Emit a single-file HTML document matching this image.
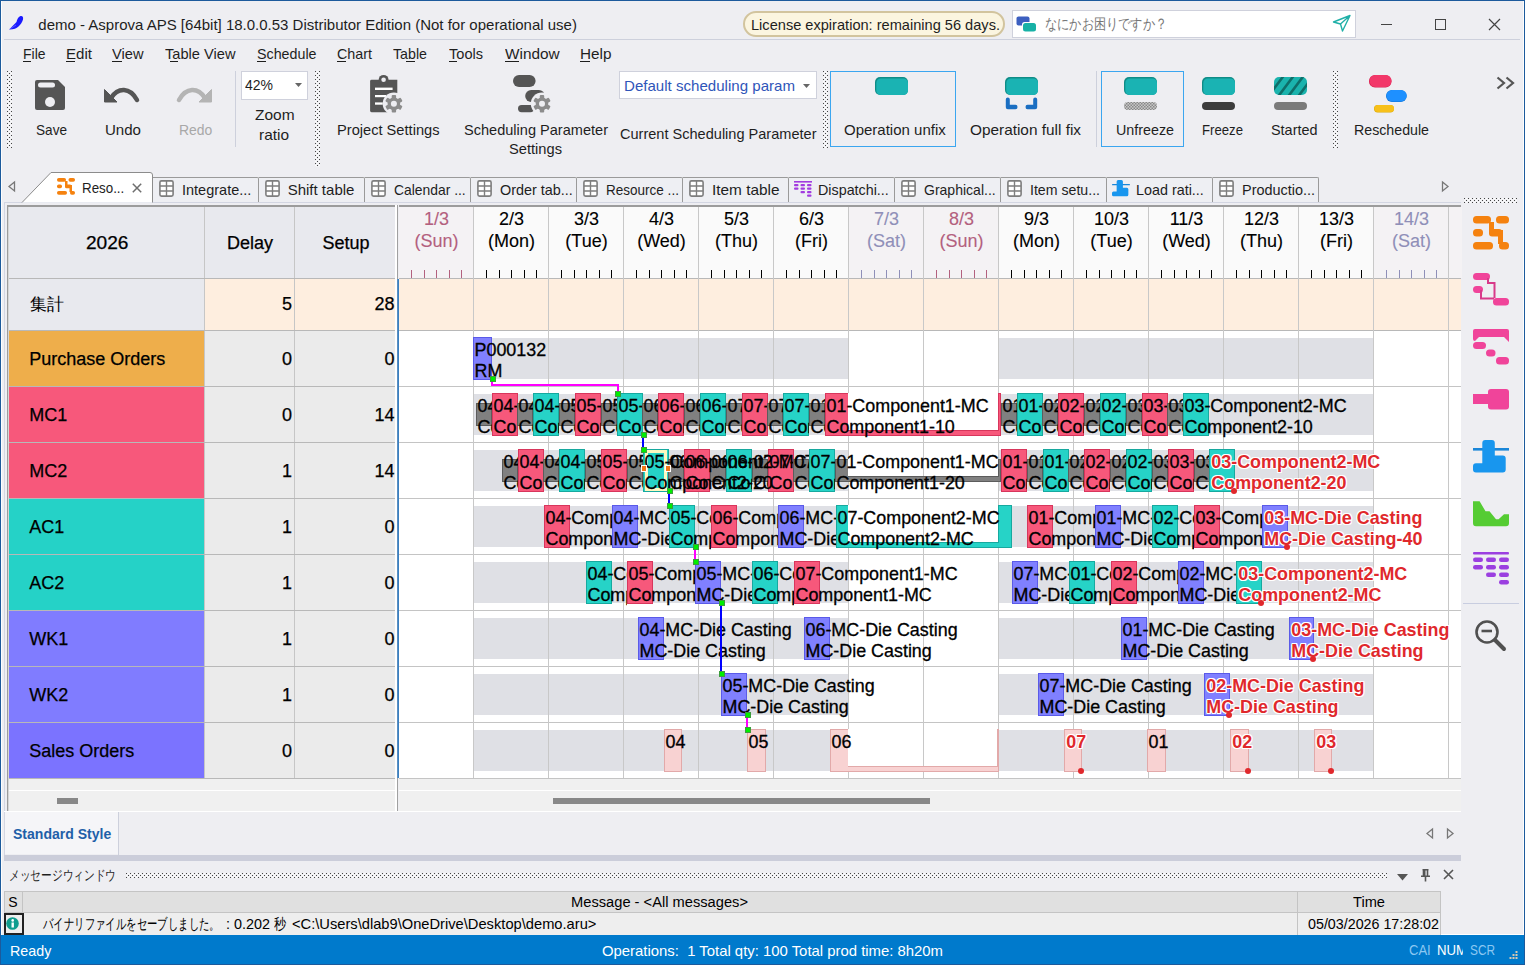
<!DOCTYPE html>
<html><head><meta charset="utf-8"><title>Asprova APS</title>
<style>
html,body{margin:0;padding:0;}
body{width:1525px;height:965px;overflow:hidden;position:relative;background:#eeeef2;font-family:"Liberation Sans",sans-serif;}
.a{position:absolute;}
.t{position:absolute;white-space:pre;}
svg{position:absolute;overflow:visible;}

</style></head><body>
<svg width="0" height="0" style="position:absolute"><defs><pattern id="gripp" width="4" height="4" patternUnits="userSpaceOnUse"><rect width="1" height="1" fill="#454545"/><rect x="2" y="2" width="1" height="1" fill="#454545"/><rect x="2" y="0" width="1" height="1" fill="#fdfdfd"/><rect x="0" y="2" width="1" height="1" fill="#fdfdfd"/><rect x="1" y="1" width="1" height="1" fill="#f6f6f8"/><rect x="3" y="3" width="1" height="1" fill="#f6f6f8"/><rect x="1" y="3" width="1" height="1" fill="#f6f6f8"/><rect x="3" y="1" width="1" height="1" fill="#f6f6f8"/></pattern></defs></svg>
<div class=a style="left:0px;top:0px;width:1525px;height:1px;background:#1c5a9c;"></div>
<div class=a style="left:0px;top:0px;width:1px;height:965px;background:#1c5a9c;"></div>
<div class=a style="left:1524px;top:0px;width:1px;height:965px;background:#1c5a9c;"></div>
<div class=a style="left:0px;top:964px;width:1525px;height:1px;background:#1c5a9c;"></div>
<div class=a style="left:1px;top:1px;width:1px;height:934px;background:#fdfdfd;"></div>
<div class=a style="left:1523px;top:1px;width:1px;height:934px;background:#fdfdfd;"></div>
<svg style="left:0px;top:0px" width="30" height="36" viewBox="0 0 30 36"><path d="M9 29.6 C11 27.5 14 24.5 16.5 22 C17 19.5 18 17 20.5 16 C22.5 15.5 23.5 17 23 19.5 C22.5 22 20.5 24.5 18.5 26.5 C16.5 28.5 14 29.5 9 29.6 Z" fill="#1a1aff"/><path d="M10 29 L16 25" stroke="#6a6aff" stroke-width="0.8"/></svg>
<div class=t style="left:38.30px;top:16.90px;font-size:15px;line-height:15px;color:#1e1e1e;">demo - Asprova APS [64bit] 18.0.0.53 Distributor Edition (Not for operational use)</div>
<div class=a style="left:743px;top:11px;width:258px;height:22px;background:#fbf5e0;border:2px solid #d2c49e;border-radius:13px;"></div>
<div class=t style="left:751.00px;top:16.90px;font-size:15px;line-height:15px;color:#1e1e1e;transform:scaleX(0.9727);transform-origin:0 0;">License expiration: remaining 56 days.</div>
<div class=a style="left:1012px;top:10px;width:342px;height:26px;background:#ffffff;border:1px solid #cfd1dc;"></div>
<svg style="left:1016px;top:16px" width="22" height="17" viewBox="0 0 22 17"><rect x="0.5" y="0.5" width="13" height="9" rx="2" fill="#3c5fc0"/><rect x="6" y="6" width="14" height="9.5" rx="2.5" fill="#ffffff"/><rect x="7" y="7" width="13" height="8.5" rx="2.5" fill="#17b1a6"/></svg>
<div class=t style="left:1045.00px;top:17.22px;font-size:14.5px;line-height:14.5px;color:#767676;transform:scaleX(0.8133);transform-origin:0 0;">なにかお困りですか？</div>
<svg style="left:1332px;top:14px" width="20" height="18" viewBox="0 0 20 18"><path d="M1.5 8 L18 1.5 L10.5 17 L8.5 10 Z M8.5 10 L18 1.5" fill="none" stroke="#20b0a8" stroke-width="1.4" stroke-linejoin="round"/></svg>
<div class=a style="left:1381px;top:24px;width:11px;height:1px;background:#444;"></div>
<div class=a style="left:1435px;top:19px;width:11px;height:11px;border:1px solid #444;box-sizing:border-box;"></div>
<svg style="left:1488px;top:18px" width="13" height="13" viewBox="0 0 13 13"><path d="M1 1 L12 12 M12 1 L1 12" stroke="#444" stroke-width="1.2"/></svg>
<div class=a style="left:4px;top:39px;width:1516px;height:1px;background:#cdd0dc;"></div>
<div class=t style="left:23.00px;top:46.30px;font-size:15px;line-height:15px;color:#1e1e1e;transform:scaleX(0.9308);transform-origin:0 0;">File</div>
<div class=t style="left:66.00px;top:46.30px;font-size:15px;line-height:15px;color:#1e1e1e;transform:scaleX(1.0054);transform-origin:0 0;">Edit</div>
<div class=t style="left:112.00px;top:46.30px;font-size:15px;line-height:15px;color:#1e1e1e;transform:scaleX(0.9767);transform-origin:0 0;">View</div>
<div class=t style="left:164.50px;top:46.30px;font-size:15px;line-height:15px;color:#1e1e1e;transform:scaleX(0.9754);transform-origin:0 0;">Table View</div>
<div class=t style="left:257.00px;top:46.30px;font-size:15px;line-height:15px;color:#1e1e1e;transform:scaleX(0.9510);transform-origin:0 0;">Schedule</div>
<div class=t style="left:337.00px;top:46.30px;font-size:15px;line-height:15px;color:#1e1e1e;transform:scaleX(0.9540);transform-origin:0 0;">Chart</div>
<div class=t style="left:392.50px;top:46.30px;font-size:15px;line-height:15px;color:#1e1e1e;transform:scaleX(0.9481);transform-origin:0 0;">Table</div>
<div class=t style="left:449.00px;top:46.30px;font-size:15px;line-height:15px;color:#1e1e1e;transform:scaleX(0.9706);transform-origin:0 0;">Tools</div>
<div class=t style="left:505.00px;top:46.30px;font-size:15px;line-height:15px;color:#1e1e1e;transform:scaleX(1.0233);transform-origin:0 0;">Window</div>
<div class=t style="left:580.00px;top:46.30px;font-size:15px;line-height:15px;color:#1e1e1e;transform:scaleX(1.0208);transform-origin:0 0;">Help</div>
<div class=a style="left:23px;top:61px;width:8px;height:1px;background:#1e1e1e;"></div>
<div class=a style="left:66px;top:61px;width:9px;height:1px;background:#1e1e1e;"></div>
<div class=a style="left:112px;top:61px;width:10px;height:1px;background:#1e1e1e;"></div>
<div class=a style="left:170px;top:61px;width:8px;height:1px;background:#1e1e1e;"></div>
<div class=a style="left:257px;top:61px;width:9px;height:1px;background:#1e1e1e;"></div>
<div class=a style="left:337px;top:61px;width:9px;height:1px;background:#1e1e1e;"></div>
<div class=a style="left:406px;top:61px;width:9px;height:1px;background:#1e1e1e;"></div>
<div class=a style="left:449px;top:61px;width:8px;height:1px;background:#1e1e1e;"></div>
<div class=a style="left:505px;top:61px;width:14px;height:1px;background:#1e1e1e;"></div>
<div class=a style="left:580px;top:61px;width:10px;height:1px;background:#1e1e1e;"></div>
<svg style="left:7px;top:71px" width="5" height="77" shape-rendering="crispEdges"><rect width="5" height="77" fill="url(#gripp)"/></svg>
<svg style="left:315px;top:71px" width="5" height="96" shape-rendering="crispEdges"><rect width="5" height="96" fill="url(#gripp)"/></svg>
<svg style="left:823px;top:71px" width="5" height="77" shape-rendering="crispEdges"><rect width="5" height="77" fill="url(#gripp)"/></svg>
<svg style="left:1333px;top:71px" width="5" height="77" shape-rendering="crispEdges"><rect width="5" height="77" fill="url(#gripp)"/></svg>
<div class=a style="left:235px;top:71px;width:1px;height:76px;background:#cdd0dc;"></div>
<div class=a style="left:1096px;top:71px;width:1px;height:76px;background:#cdd0dc;"></div>
<svg style="left:35px;top:80px" width="30" height="30" viewBox="0 0 30 30"><path d="M2 0 H23 L30 7 V28 Q30 30 28 30 H2 Q0 30 0 28 V2 Q0 0 2 0 Z" fill="#555"/><rect x="3" y="2.5" width="17" height="5" rx="2.5" fill="#eeeef2"/><circle cx="15" cy="22" r="5" fill="#eeeef2"/></svg>
<div class=t style="left:36.00px;top:122.30px;font-size:15px;line-height:15px;color:#1e1e1e;transform:scaleX(0.9063);transform-origin:0 0;">Save</div>
<svg style="left:104px;top:88px" width="35" height="16" viewBox="0 0 35 16"><path d="M7 10 C 14 -1, 26 -1, 33 12" fill="none" stroke="#555" stroke-width="4.5" stroke-linecap="round"/><path d="M0.5 1.5 L0.5 14 L13 14 Z" fill="#555" stroke="#555" stroke-width="1" stroke-linejoin="round"/></svg>
<div class=t style="left:105.00px;top:122.30px;font-size:15px;line-height:15px;color:#1e1e1e;transform:scaleX(1.0039);transform-origin:0 0;">Undo</div>
<svg style="left:177px;top:88px" width="35" height="16" viewBox="0 0 35 16"><path d="M28 10 C 21 -1, 9 -1, 2 12" fill="none" stroke="#b4b4b4" stroke-width="4.5" stroke-linecap="round"/><path d="M34.5 1.5 L34.5 14 L22 14 Z" fill="#b4b4b4" stroke="#b4b4b4" stroke-width="1" stroke-linejoin="round"/></svg>
<div class=t style="left:178.70px;top:122.30px;font-size:15px;line-height:15px;color:#a8a8a8;transform:scaleX(0.9286);transform-origin:0 0;">Redo</div>
<div class=a style="left:241px;top:71px;width:67px;height:29px;background:#ffffff;border:1px solid #cfd1dc;box-sizing:border-box;"></div>
<div class=t style="left:245.00px;top:77.30px;font-size:15px;line-height:15px;color:#1e1e1e;transform:scaleX(0.9324);transform-origin:0 0;">42%</div>
<svg style="left:295px;top:83px" width="7" height="4" viewBox="0 0 7 4"><path d="M0 0 H7 L3.5 4 Z" fill="#666"/></svg>
<div class=t style="left:254.80px;top:107.00px;font-size:15px;line-height:15px;color:#1e1e1e;transform:scaleX(1.0328);transform-origin:0 0;">Zoom</div>
<div class=t style="left:259.00px;top:127.10px;font-size:15px;line-height:15px;color:#1e1e1e;transform:scaleX(1.0278);transform-origin:0 0;">ratio</div>
<svg style="left:360px;top:70px" width="50" height="50" viewBox="0 0 50 50">
<path d="M11.5 9.8 H37.3 V42.2 H11.5 Q10.1 42.2 10.1 40.8 V11.2 Q10.1 9.8 11.5 9.8 Z" fill="#555"/>
<circle cx="23.6" cy="9.8" r="4.9" fill="#555"/><circle cx="23.6" cy="9.8" r="2.3" fill="#eeeef2"/>
<rect x="15" y="17.6" width="17.6" height="2.4" fill="#fff"/><rect x="15" y="25" width="11" height="2.2" fill="#fff"/><rect x="15" y="32.4" width="7.8" height="2.3" fill="#fff"/>
<circle cx="33.9" cy="33.7" r="11.2" fill="#eeeef2"/>
<g transform="translate(33.9 33.7)" fill="#8c8c8c"><circle r="6.3"/>
<rect x="-2.2" y="-8.8" width="4.4" height="17.6" rx="1"/><rect x="-2.2" y="-8.8" width="4.4" height="17.6" rx="1" transform="rotate(60)"/><rect x="-2.2" y="-8.8" width="4.4" height="17.6" rx="1" transform="rotate(120)"/>
<circle r="3" fill="#eeeef2"/></g></svg>
<div class=t style="left:336.50px;top:122.10px;font-size:15px;line-height:15px;color:#1e1e1e;transform:scaleX(0.9756);transform-origin:0 0;">Project Settings</div>
<svg style="left:505px;top:70px" width="50" height="50" viewBox="0 0 50 50">
<rect x="8" y="4.9" width="22.6" height="12.2" rx="6" fill="#555"/>
<rect x="20.2" y="20" width="19.7" height="11.9" rx="6" fill="#555"/>
<rect x="13" y="35" width="16" height="7.2" rx="3.6" fill="#555"/>
<circle cx="37" cy="33.7" r="11.2" fill="#eeeef2"/>
<g transform="translate(37 33.7)" fill="#8c8c8c"><circle r="6.3"/>
<rect x="-2.2" y="-8.8" width="4.4" height="17.6" rx="1"/><rect x="-2.2" y="-8.8" width="4.4" height="17.6" rx="1" transform="rotate(60)"/><rect x="-2.2" y="-8.8" width="4.4" height="17.6" rx="1" transform="rotate(120)"/>
<circle r="3" fill="#eeeef2"/></g></svg>
<div class=t style="left:463.60px;top:122.10px;font-size:15px;line-height:15px;color:#1e1e1e;transform:scaleX(0.9702);transform-origin:0 0;">Scheduling Parameter</div>
<div class=t style="left:509.00px;top:141.30px;font-size:15px;line-height:15px;color:#1e1e1e;transform:scaleX(0.9778);transform-origin:0 0;">Settings</div>
<div class=a style="left:619px;top:71px;width:198px;height:28px;background:#ffffff;border:1px solid #cfd1dc;box-sizing:border-box;"></div>
<div class=t style="left:623.80px;top:78.00px;font-size:15px;line-height:15px;color:#2f55b9;transform:scaleX(1.0052);transform-origin:0 0;">Default scheduling param</div>
<div class=a style="left:795px;top:73px;width:8px;height:24px;background:#ffffff;"></div>
<svg style="left:803px;top:84px" width="7" height="4" viewBox="0 0 7 4"><path d="M0 0 H7 L3.5 4 Z" fill="#666"/></svg>
<div class=t style="left:619.50px;top:125.80px;font-size:15px;line-height:15px;color:#1e1e1e;transform:scaleX(0.9698);transform-origin:0 0;">Current Scheduling Parameter</div>
<div class=a style="left:830px;top:71px;width:126px;height:76px;border:1px solid #3ba6f0;box-sizing:border-box;"></div>
<svg style="left:874px;top:76px" width="36" height="21" viewBox="0 0 36 21"><rect x="1" y="1" width="33" height="18" rx="5" fill="#0f8c87"/><rect x="2.3" y="2.5" width="31.7" height="16.5" rx="4.5" fill="#1ab3b3"/></svg>
<div class=t style="left:844.00px;top:122.10px;font-size:15px;line-height:15px;color:#1e1e1e;">Operation unfix</div>
<svg style="left:1004px;top:76px" width="36" height="36" viewBox="0 0 36 36"><rect x="1" y="1" width="33" height="18" rx="5" fill="#0f8c87"/><rect x="2.3" y="2.5" width="31.7" height="16.5" rx="4.5" fill="#1ab3b3"/><path d="M1.8 23.5 Q1.8 21.5 3.8 21.5 Q5.8 21.5 5.8 23.5 V28.8 H11.5 Q13.5 28.8 13.5 31 Q13.5 33.3 11.5 33.3 H3.8 Q1.8 33.3 1.8 31.3 Z" fill="#1a6ec2"/><path d="M33.2 23.5 Q33.2 21.5 31.2 21.5 Q29.2 21.5 29.2 23.5 V28.8 H23.5 Q21.5 28.8 21.5 31 Q21.5 33.3 23.5 33.3 H31.2 Q33.2 33.3 33.2 31.3 Z" fill="#1a6ec2"/></svg>
<div class=t style="left:970.00px;top:122.10px;font-size:15px;line-height:15px;color:#1e1e1e;transform:scaleX(1.0241);transform-origin:0 0;">Operation full fix</div>
<div class=a style="left:1101px;top:71px;width:83px;height:76px;border:1px solid #3ba6f0;box-sizing:border-box;"></div>
<svg style="left:1123px;top:76px" width="36" height="36" viewBox="0 0 36 36"><rect x="1" y="1" width="33" height="18" rx="5" fill="#0f8c87"/><rect x="2.3" y="2.5" width="31.7" height="16.5" rx="4.5" fill="#1ab3b3"/><rect x="1" y="26" width="33" height="8" rx="4" fill="#c8c8c8"/><rect x="1" y="26" width="33" height="8" rx="4" fill="url(#chk)"/><defs><pattern id="chk" width="3" height="3" patternUnits="userSpaceOnUse"><rect width="1.5" height="1.5" fill="#888"/><rect x="1.5" y="1.5" width="1.5" height="1.5" fill="#888"/></pattern></defs></svg>
<div class=t style="left:1115.50px;top:122.10px;font-size:15px;line-height:15px;color:#1e1e1e;transform:scaleX(0.9528);transform-origin:0 0;">Unfreeze</div>
<svg style="left:1201px;top:76px" width="36" height="36" viewBox="0 0 36 36"><rect x="1" y="1" width="33" height="18" rx="5" fill="#0f8c87"/><rect x="2.3" y="2.5" width="31.7" height="16.5" rx="4.5" fill="#1ab3b3"/><rect x="1" y="26" width="33" height="8" rx="4" fill="#3c3c3c"/></svg>
<div class=t style="left:1201.50px;top:121.80px;font-size:15px;line-height:15px;color:#1e1e1e;transform:scaleX(0.8782);transform-origin:0 0;">Freeze</div>
<svg style="left:1273px;top:76px" width="36" height="36" viewBox="0 0 36 36"><defs><clipPath id="stc"><rect x="1" y="1" width="33" height="18" rx="5"/></clipPath></defs><rect x="1" y="1" width="33" height="18" rx="5" fill="#1ab3ad"/><g clip-path="url(#stc)" stroke="#0e6e69" stroke-width="2.6"><path d="M-6 22 L12 -2 M4 22 L22 -2 M14 22 L32 -2 M24 22 L42 -2"/></g><rect x="1" y="26" width="33" height="8" rx="4" fill="#7a7a7a"/></svg>
<div class=t style="left:1270.50px;top:121.80px;font-size:15px;line-height:15px;color:#1e1e1e;transform:scaleX(0.9612);transform-origin:0 0;">Started</div>
<svg style="left:1368px;top:74px" width="40" height="40" viewBox="0 0 40 40"><rect x="1" y="1" width="22.5" height="12.6" rx="6" fill="#d62150"/><rect x="1.5" y="1" width="22" height="12" rx="6" fill="#f2386a"/><rect x="18" y="16" width="20.7" height="12" rx="6" fill="#0e73d6"/><rect x="18.5" y="16" width="20.2" height="11.5" rx="6" fill="#1e90ff"/><rect x="6" y="31" width="20" height="7.5" rx="3.7" fill="#d9a800"/><rect x="6.5" y="31" width="19.5" height="7" rx="3.5" fill="#f7c01a"/></svg>
<div class=t style="left:1354.00px;top:121.80px;font-size:15px;line-height:15px;color:#1e1e1e;transform:scaleX(0.9467);transform-origin:0 0;">Reschedule</div>
<svg style="left:1496px;top:76px" width="21" height="14" viewBox="0 0 21 14"><path d="M1.5 1.5 L8 7 L1.5 12.5 M10.5 1.5 L17 7 L10.5 12.5" fill="none" stroke="#555" stroke-width="2.2"/></svg>
<div class=a style="left:4px;top:202px;width:1457px;height:1px;background:#d3d6e2;"></div>
<svg style="left:8px;top:181px" width="8" height="11" viewBox="0 0 8 11"><path d="M6.5 1 L1 5.5 L6.5 10 Z" fill="none" stroke="#777" stroke-width="1.3"/></svg>
<svg style="left:1441px;top:181px" width="8" height="11" viewBox="0 0 8 11"><path d="M1.5 1 L7 5.5 L1.5 10 Z" fill="none" stroke="#777" stroke-width="1.3"/></svg>
<div class=a style="left:153px;top:177px;width:106px;height:25px;background:#eeeff3;border-top:1px solid #9a9a9a;border-right:1px solid #9a9a9a;box-sizing:border-box;border-top-right-radius:2px;"></div>
<svg style="left:159px;top:180px" width="15" height="17" viewBox="0 0 15 17"><rect x="0.9" y="0.9" width="13.2" height="15.2" rx="1.6" fill="#fff" stroke="#7e7e7e" stroke-width="1.6"/><path d="M7.5 1 V16 M1 6 H14 M1 11 H14" stroke="#7e7e7e" stroke-width="1.4"/></svg>
<div class=t style="left:181.70px;top:182.00px;font-size:15px;line-height:15px;color:#1e1e1e;transform:scaleX(0.9663);transform-origin:0 0;">Integrate...</div>
<div class=a style="left:259px;top:177px;width:106px;height:25px;background:#eeeff3;border-top:1px solid #9a9a9a;border-right:1px solid #9a9a9a;box-sizing:border-box;border-top-right-radius:2px;"></div>
<svg style="left:265px;top:180px" width="15" height="17" viewBox="0 0 15 17"><rect x="0.9" y="0.9" width="13.2" height="15.2" rx="1.6" fill="#fff" stroke="#7e7e7e" stroke-width="1.6"/><path d="M7.5 1 V16 M1 6 H14 M1 11 H14" stroke="#7e7e7e" stroke-width="1.4"/></svg>
<div class=t style="left:287.70px;top:182.00px;font-size:15px;line-height:15px;color:#1e1e1e;">Shift table</div>
<div class=a style="left:365px;top:177px;width:106px;height:25px;background:#eeeff3;border-top:1px solid #9a9a9a;border-right:1px solid #9a9a9a;box-sizing:border-box;border-top-right-radius:2px;"></div>
<svg style="left:371px;top:180px" width="15" height="17" viewBox="0 0 15 17"><rect x="0.9" y="0.9" width="13.2" height="15.2" rx="1.6" fill="#fff" stroke="#7e7e7e" stroke-width="1.6"/><path d="M7.5 1 V16 M1 6 H14 M1 11 H14" stroke="#7e7e7e" stroke-width="1.4"/></svg>
<div class=t style="left:393.70px;top:182.00px;font-size:15px;line-height:15px;color:#1e1e1e;transform:scaleX(0.9246);transform-origin:0 0;">Calendar ...</div>
<div class=a style="left:471px;top:177px;width:106px;height:25px;background:#eeeff3;border-top:1px solid #9a9a9a;border-right:1px solid #9a9a9a;box-sizing:border-box;border-top-right-radius:2px;"></div>
<svg style="left:477px;top:180px" width="15" height="17" viewBox="0 0 15 17"><rect x="0.9" y="0.9" width="13.2" height="15.2" rx="1.6" fill="#fff" stroke="#7e7e7e" stroke-width="1.6"/><path d="M7.5 1 V16 M1 6 H14 M1 11 H14" stroke="#7e7e7e" stroke-width="1.4"/></svg>
<div class=t style="left:499.70px;top:182.00px;font-size:15px;line-height:15px;color:#1e1e1e;transform:scaleX(0.9595);transform-origin:0 0;">Order tab...</div>
<div class=a style="left:577px;top:177px;width:106px;height:25px;background:#eeeff3;border-top:1px solid #9a9a9a;border-right:1px solid #9a9a9a;box-sizing:border-box;border-top-right-radius:2px;"></div>
<svg style="left:583px;top:180px" width="15" height="17" viewBox="0 0 15 17"><rect x="0.9" y="0.9" width="13.2" height="15.2" rx="1.6" fill="#fff" stroke="#7e7e7e" stroke-width="1.6"/><path d="M7.5 1 V16 M1 6 H14 M1 11 H14" stroke="#7e7e7e" stroke-width="1.4"/></svg>
<div class=t style="left:605.70px;top:182.00px;font-size:15px;line-height:15px;color:#1e1e1e;transform:scaleX(0.9014);transform-origin:0 0;">Resource ...</div>
<div class=a style="left:683px;top:177px;width:106px;height:25px;background:#eeeff3;border-top:1px solid #9a9a9a;border-right:1px solid #9a9a9a;box-sizing:border-box;border-top-right-radius:2px;"></div>
<svg style="left:689px;top:180px" width="15" height="17" viewBox="0 0 15 17"><rect x="0.9" y="0.9" width="13.2" height="15.2" rx="1.6" fill="#fff" stroke="#7e7e7e" stroke-width="1.6"/><path d="M7.5 1 V16 M1 6 H14 M1 11 H14" stroke="#7e7e7e" stroke-width="1.4"/></svg>
<div class=t style="left:711.70px;top:182.00px;font-size:15px;line-height:15px;color:#1e1e1e;transform:scaleX(1.0247);transform-origin:0 0;">Item table</div>
<div class=a style="left:789px;top:177px;width:106px;height:25px;background:#eeeff3;border-top:1px solid #9a9a9a;border-right:1px solid #9a9a9a;box-sizing:border-box;border-top-right-radius:2px;"></div>
<svg style="left:794px;top:181px" width="19" height="16" viewBox="0 0 19 16"><g fill="#a23be0"><rect x="0" y="0" width="18" height="1.6"/><rect x="0" y="3" width="4.5" height="2.2" rx="1"/><rect x="6.5" y="3" width="4.5" height="2.2" rx="1"/><rect x="13" y="3" width="4.5" height="2.2" rx="1"/><rect x="0" y="6.5" width="4.5" height="2.2" rx="1"/><rect x="6.5" y="6.5" width="4.5" height="2.2" rx="1"/><rect x="13" y="6.5" width="4.5" height="2.2" rx="1"/><rect x="6.5" y="10" width="4.5" height="2.2" rx="1"/><rect x="13" y="10" width="4.5" height="2.2" rx="1"/><rect x="13" y="13.5" width="4.5" height="2.2" rx="1"/></g></svg>
<div class=t style="left:817.70px;top:182.00px;font-size:15px;line-height:15px;color:#1e1e1e;transform:scaleX(0.9541);transform-origin:0 0;">Dispatchi...</div>
<div class=a style="left:895px;top:177px;width:106px;height:25px;background:#eeeff3;border-top:1px solid #9a9a9a;border-right:1px solid #9a9a9a;box-sizing:border-box;border-top-right-radius:2px;"></div>
<svg style="left:901px;top:180px" width="15" height="17" viewBox="0 0 15 17"><rect x="0.9" y="0.9" width="13.2" height="15.2" rx="1.6" fill="#fff" stroke="#7e7e7e" stroke-width="1.6"/><path d="M7.5 1 V16 M1 6 H14 M1 11 H14" stroke="#7e7e7e" stroke-width="1.4"/></svg>
<div class=t style="left:923.70px;top:182.00px;font-size:15px;line-height:15px;color:#1e1e1e;transform:scaleX(0.9348);transform-origin:0 0;">Graphical...</div>
<div class=a style="left:1001px;top:177px;width:106px;height:25px;background:#eeeff3;border-top:1px solid #9a9a9a;border-right:1px solid #9a9a9a;box-sizing:border-box;border-top-right-radius:2px;"></div>
<svg style="left:1007px;top:180px" width="15" height="17" viewBox="0 0 15 17"><rect x="0.9" y="0.9" width="13.2" height="15.2" rx="1.6" fill="#fff" stroke="#7e7e7e" stroke-width="1.6"/><path d="M7.5 1 V16 M1 6 H14 M1 11 H14" stroke="#7e7e7e" stroke-width="1.4"/></svg>
<div class=t style="left:1029.70px;top:182.00px;font-size:15px;line-height:15px;color:#1e1e1e;transform:scaleX(0.9434);transform-origin:0 0;">Item setu...</div>
<div class=a style="left:1107px;top:177px;width:106px;height:25px;background:#eeeff3;border-top:1px solid #9a9a9a;border-right:1px solid #9a9a9a;box-sizing:border-box;border-top-right-radius:2px;"></div>
<svg style="left:1112px;top:180px" width="18" height="16.5" viewBox="0 0 36 33"><rect x="0" y="8" width="36" height="2.6" rx="1.3" fill="#1a86d8"/><path d="M12.3 0 H18.8 Q21.8 0 21.8 3 V15.6 H29.7 Q32.7 15.6 32.7 18.6 V29.5 Q32.7 32.5 29.7 32.5 H3 Q0 32.5 0 29.5 V26.2 Q0 23.2 3 23.2 H9.3 V3 Q9.3 0 12.3 0 Z" fill="#1896ee"/></svg>
<div class=t style="left:1135.70px;top:182.00px;font-size:15px;line-height:15px;color:#1e1e1e;transform:scaleX(0.9564);transform-origin:0 0;">Load rati...</div>
<div class=a style="left:1213px;top:177px;width:106px;height:25px;background:#eeeff3;border-top:1px solid #9a9a9a;border-right:1px solid #9a9a9a;box-sizing:border-box;border-top-right-radius:2px;"></div>
<svg style="left:1219px;top:180px" width="15" height="17" viewBox="0 0 15 17"><rect x="0.9" y="0.9" width="13.2" height="15.2" rx="1.6" fill="#fff" stroke="#7e7e7e" stroke-width="1.6"/><path d="M7.5 1 V16 M1 6 H14 M1 11 H14" stroke="#7e7e7e" stroke-width="1.4"/></svg>
<div class=t style="left:1241.70px;top:182.00px;font-size:15px;line-height:15px;color:#1e1e1e;transform:scaleX(0.9621);transform-origin:0 0;">Productio...</div>
<svg style="left:21px;top:172px" width="133" height="31" viewBox="0 0 133 31"><path d="M1 30.5 L30 0.5 H129 Q131.5 0.5 131.5 3 V30.5" fill="#ffffff" stroke="#8c8c8c" stroke-width="1"/></svg>
<svg style="left:57px;top:178px" width="18.5" height="17.5" viewBox="0 0 37 35"><g fill="#f5820f"><rect x="0" y="0" width="18" height="7.5" rx="3.5"/><rect x="23" y="0" width="13" height="7.5" rx="3.5"/><rect x="0" y="13" width="10" height="7.5" rx="3.5"/><rect x="16" y="13" width="13" height="7.5" rx="3"/><rect x="16" y="6" width="5" height="10"/><rect x="25" y="14" width="5" height="14"/><rect x="0" y="26" width="20" height="7.5" rx="3.5"/><rect x="26" y="26" width="10" height="7.5" rx="3.5"/></g></svg>
<div class=t style="left:81.70px;top:179.80px;font-size:15px;line-height:15px;color:#1e1e1e;transform:scaleX(0.8899);transform-origin:0 0;">Reso...</div>
<svg style="left:132px;top:183px" width="10" height="10" viewBox="0 0 10 10"><path d="M0.8 0.8 L9.2 9.2 M9.2 0.8 L0.8 9.2" stroke="#6e6e6e" stroke-width="1.5"/></svg>
<svg style="left:1464px;top:198px" width="53" height="5" shape-rendering="crispEdges"><rect width="53" height="5" fill="url(#gripp)"/></svg>
<div class=a style="left:7px;top:205px;width:389px;height:2px;background:#9c9c9c;"></div>
<div class=a style="left:7px;top:205px;width:1px;height:606px;background:#9c9c9c;"></div>
<div class=a style="left:8px;top:207px;width:1px;height:604px;background:#d6d6d6;"></div>
<div class=a style="left:4px;top:203px;width:1px;height:652px;background:#d3d6e2;"></div>
<div class=a style="left:9px;top:207px;width:386px;height:71px;background:#e8e9ee;"></div>
<div class=a style="left:204px;top:207px;width:1px;height:572px;background:#c6c6c6;"></div>
<div class=a style="left:294px;top:207px;width:1px;height:572px;background:#c6c6c6;"></div>
<div class=a style="left:9px;top:278px;width:386px;height:1px;background:#b8b8b8;"></div>
<div class=t style="left:85.75px;top:233.76px;font-size:18px;line-height:18px;color:#000;transform:scaleX(1.0613);transform-origin:0 0;-webkit-text-stroke:0.25px #000;">2026</div>
<div class=t style="left:226.98px;top:233.76px;font-size:18px;line-height:18px;color:#000;-webkit-text-stroke:0.25px #000;">Delay</div>
<div class=t style="left:322.48px;top:233.76px;font-size:18px;line-height:18px;color:#000;-webkit-text-stroke:0.25px #000;">Setup</div>
<div class=a style="left:9px;top:279px;width:195px;height:51px;background:#e8e9ee;"></div>
<div class=a style="left:205px;top:279px;width:89px;height:51px;background:#feeedf;"></div>
<div class=a style="left:295px;top:279px;width:100px;height:51px;background:#feeedf;"></div>
<div class=a style="left:9px;top:330px;width:386px;height:1px;background:#b8b8b8;"></div>
<div class=t style="left:29.60px;top:295.60px;font-size:17px;line-height:17px;color:#000;">集計</div>
<div class=t style="left:281.98px;top:295.06px;font-size:18px;line-height:18px;color:#000;-webkit-text-stroke:0.25px #000;">5</div>
<div class=t style="left:374.47px;top:295.06px;font-size:18px;line-height:18px;color:#000;-webkit-text-stroke:0.25px #000;">28</div>
<div class=a style="left:9px;top:331px;width:195px;height:55px;background:#eeae4b;"></div>
<div class=a style="left:205px;top:331px;width:89px;height:55px;background:#ebebeb;"></div>
<div class=a style="left:295px;top:331px;width:100px;height:55px;background:#ebebeb;"></div>
<div class=a style="left:9px;top:386px;width:386px;height:1px;background:#b8b8b8;"></div>
<div class=t style="left:29.30px;top:349.76px;font-size:18px;line-height:18px;color:#000;-webkit-text-stroke:0.25px #000;">Purchase Orders</div>
<div class=t style="left:281.98px;top:349.76px;font-size:18px;line-height:18px;color:#000;-webkit-text-stroke:0.25px #000;">0</div>
<div class=t style="left:384.48px;top:349.76px;font-size:18px;line-height:18px;color:#000;-webkit-text-stroke:0.25px #000;">0</div>
<div class=a style="left:9px;top:387px;width:195px;height:55px;background:#f7587b;"></div>
<div class=a style="left:205px;top:387px;width:89px;height:55px;background:#ebebeb;"></div>
<div class=a style="left:295px;top:387px;width:100px;height:55px;background:#ebebeb;"></div>
<div class=a style="left:9px;top:442px;width:386px;height:1px;background:#b8b8b8;"></div>
<div class=t style="left:29.30px;top:405.76px;font-size:18px;line-height:18px;color:#000;-webkit-text-stroke:0.25px #000;">MC1</div>
<div class=t style="left:281.98px;top:405.76px;font-size:18px;line-height:18px;color:#000;-webkit-text-stroke:0.25px #000;">0</div>
<div class=t style="left:374.47px;top:405.76px;font-size:18px;line-height:18px;color:#000;-webkit-text-stroke:0.25px #000;">14</div>
<div class=a style="left:9px;top:443px;width:195px;height:55px;background:#f7587b;"></div>
<div class=a style="left:205px;top:443px;width:89px;height:55px;background:#ebebeb;"></div>
<div class=a style="left:295px;top:443px;width:100px;height:55px;background:#ebebeb;"></div>
<div class=a style="left:9px;top:498px;width:386px;height:1px;background:#b8b8b8;"></div>
<div class=t style="left:29.30px;top:461.76px;font-size:18px;line-height:18px;color:#000;-webkit-text-stroke:0.25px #000;">MC2</div>
<div class=t style="left:281.98px;top:461.76px;font-size:18px;line-height:18px;color:#000;-webkit-text-stroke:0.25px #000;">1</div>
<div class=t style="left:374.47px;top:461.76px;font-size:18px;line-height:18px;color:#000;-webkit-text-stroke:0.25px #000;">14</div>
<div class=a style="left:9px;top:499px;width:195px;height:55px;background:#25d2c7;"></div>
<div class=a style="left:205px;top:499px;width:89px;height:55px;background:#ebebeb;"></div>
<div class=a style="left:295px;top:499px;width:100px;height:55px;background:#ebebeb;"></div>
<div class=a style="left:9px;top:554px;width:386px;height:1px;background:#b8b8b8;"></div>
<div class=t style="left:29.30px;top:517.76px;font-size:18px;line-height:18px;color:#000;-webkit-text-stroke:0.25px #000;">AC1</div>
<div class=t style="left:281.98px;top:517.76px;font-size:18px;line-height:18px;color:#000;-webkit-text-stroke:0.25px #000;">1</div>
<div class=t style="left:384.48px;top:517.76px;font-size:18px;line-height:18px;color:#000;-webkit-text-stroke:0.25px #000;">0</div>
<div class=a style="left:9px;top:555px;width:195px;height:55px;background:#25d2c7;"></div>
<div class=a style="left:205px;top:555px;width:89px;height:55px;background:#ebebeb;"></div>
<div class=a style="left:295px;top:555px;width:100px;height:55px;background:#ebebeb;"></div>
<div class=a style="left:9px;top:610px;width:386px;height:1px;background:#b8b8b8;"></div>
<div class=t style="left:29.30px;top:573.76px;font-size:18px;line-height:18px;color:#000;-webkit-text-stroke:0.25px #000;">AC2</div>
<div class=t style="left:281.98px;top:573.76px;font-size:18px;line-height:18px;color:#000;-webkit-text-stroke:0.25px #000;">1</div>
<div class=t style="left:384.48px;top:573.76px;font-size:18px;line-height:18px;color:#000;-webkit-text-stroke:0.25px #000;">0</div>
<div class=a style="left:9px;top:611px;width:195px;height:55px;background:#807cff;"></div>
<div class=a style="left:205px;top:611px;width:89px;height:55px;background:#ebebeb;"></div>
<div class=a style="left:295px;top:611px;width:100px;height:55px;background:#ebebeb;"></div>
<div class=a style="left:9px;top:666px;width:386px;height:1px;background:#b8b8b8;"></div>
<div class=t style="left:29.30px;top:629.76px;font-size:18px;line-height:18px;color:#000;-webkit-text-stroke:0.25px #000;">WK1</div>
<div class=t style="left:281.98px;top:629.76px;font-size:18px;line-height:18px;color:#000;-webkit-text-stroke:0.25px #000;">1</div>
<div class=t style="left:384.48px;top:629.76px;font-size:18px;line-height:18px;color:#000;-webkit-text-stroke:0.25px #000;">0</div>
<div class=a style="left:9px;top:667px;width:195px;height:55px;background:#807cff;"></div>
<div class=a style="left:205px;top:667px;width:89px;height:55px;background:#ebebeb;"></div>
<div class=a style="left:295px;top:667px;width:100px;height:55px;background:#ebebeb;"></div>
<div class=a style="left:9px;top:722px;width:386px;height:1px;background:#b8b8b8;"></div>
<div class=t style="left:29.30px;top:685.76px;font-size:18px;line-height:18px;color:#000;-webkit-text-stroke:0.25px #000;">WK2</div>
<div class=t style="left:281.98px;top:685.76px;font-size:18px;line-height:18px;color:#000;-webkit-text-stroke:0.25px #000;">1</div>
<div class=t style="left:384.48px;top:685.76px;font-size:18px;line-height:18px;color:#000;-webkit-text-stroke:0.25px #000;">0</div>
<div class=a style="left:9px;top:723px;width:195px;height:55px;background:#7b73ff;"></div>
<div class=a style="left:205px;top:723px;width:89px;height:55px;background:#ebebeb;"></div>
<div class=a style="left:295px;top:723px;width:100px;height:55px;background:#ebebeb;"></div>
<div class=a style="left:9px;top:778px;width:386px;height:1px;background:#b8b8b8;"></div>
<div class=t style="left:29.30px;top:741.76px;font-size:18px;line-height:18px;color:#000;-webkit-text-stroke:0.25px #000;">Sales Orders</div>
<div class=t style="left:281.98px;top:741.76px;font-size:18px;line-height:18px;color:#000;-webkit-text-stroke:0.25px #000;">0</div>
<div class=t style="left:384.48px;top:741.76px;font-size:18px;line-height:18px;color:#000;-webkit-text-stroke:0.25px #000;">0</div>
<div class=a style="left:9px;top:779px;width:386px;height:11px;background:#f0f0f0;"></div>
<div class=a style="left:9px;top:790px;width:386px;height:1px;background:#ffffff;"></div>
<div class=a style="left:9px;top:791px;width:386px;height:20px;background:#f0f0f0;"></div>
<div class=a style="left:57px;top:798px;width:21px;height:6px;background:#888888;"></div>
<div class=a style="left:395px;top:205px;width:2px;height:606px;background:#ffffff;"></div>
<div class=a style="left:397px;top:205px;width:1px;height:606px;background:#a0a0a0;"></div>
<div class=a style="left:398px;top:279px;width:1px;height:499px;background:#3a80c2;"></div>
<div class=a style="left:397px;top:279px;width:1px;height:499px;background:#5b8fc0;"></div>
<div class=a style="left:399px;top:207px;width:74px;height:71px;background:#f4f2f4;"></div>
<div class=t style="left:423.98px;top:209.76px;font-size:18px;line-height:18px;color:#b3607e;-webkit-text-stroke:0.1px #b3607e;">1/3</div>
<div class=t style="left:414.49px;top:231.76px;font-size:18px;line-height:18px;color:#b3607e;-webkit-text-stroke:0.1px #b3607e;">(Sun)</div>
<div class=a style="left:411px;top:270px;width:1px;height:8px;background:#b3607e;"></div>
<div class=a style="left:424px;top:270px;width:1px;height:8px;background:#b3607e;"></div>
<div class=a style="left:436px;top:270px;width:1px;height:8px;background:#b3607e;"></div>
<div class=a style="left:449px;top:270px;width:1px;height:8px;background:#b3607e;"></div>
<div class=a style="left:461px;top:270px;width:1px;height:8px;background:#b3607e;"></div>
<div class=a style="left:474px;top:207px;width:74px;height:71px;background:#fafafa;"></div>
<div class=t style="left:498.98px;top:209.76px;font-size:18px;line-height:18px;color:#000;-webkit-text-stroke:0.1px #000;">2/3</div>
<div class=t style="left:487.99px;top:231.76px;font-size:18px;line-height:18px;color:#000;-webkit-text-stroke:0.1px #000;">(Mon)</div>
<div class=a style="left:486px;top:270px;width:1px;height:8px;background:#000;"></div>
<div class=a style="left:499px;top:270px;width:1px;height:8px;background:#000;"></div>
<div class=a style="left:511px;top:270px;width:1px;height:8px;background:#000;"></div>
<div class=a style="left:524px;top:270px;width:1px;height:8px;background:#000;"></div>
<div class=a style="left:536px;top:270px;width:1px;height:8px;background:#000;"></div>
<div class=a style="left:549px;top:207px;width:74px;height:71px;background:#fafafa;"></div>
<div class=t style="left:573.98px;top:209.76px;font-size:18px;line-height:18px;color:#000;-webkit-text-stroke:0.1px #000;">3/3</div>
<div class=t style="left:565.33px;top:231.76px;font-size:18px;line-height:18px;color:#000;-webkit-text-stroke:0.1px #000;">(Tue)</div>
<div class=a style="left:561px;top:270px;width:1px;height:8px;background:#000;"></div>
<div class=a style="left:574px;top:270px;width:1px;height:8px;background:#000;"></div>
<div class=a style="left:586px;top:270px;width:1px;height:8px;background:#000;"></div>
<div class=a style="left:599px;top:270px;width:1px;height:8px;background:#000;"></div>
<div class=a style="left:611px;top:270px;width:1px;height:8px;background:#000;"></div>
<div class=a style="left:624px;top:207px;width:74px;height:71px;background:#fafafa;"></div>
<div class=t style="left:648.98px;top:209.76px;font-size:18px;line-height:18px;color:#000;-webkit-text-stroke:0.1px #000;">4/3</div>
<div class=t style="left:637.16px;top:231.76px;font-size:18px;line-height:18px;color:#000;-webkit-text-stroke:0.1px #000;">(Wed)</div>
<div class=a style="left:636px;top:270px;width:1px;height:8px;background:#000;"></div>
<div class=a style="left:649px;top:270px;width:1px;height:8px;background:#000;"></div>
<div class=a style="left:661px;top:270px;width:1px;height:8px;background:#000;"></div>
<div class=a style="left:674px;top:270px;width:1px;height:8px;background:#000;"></div>
<div class=a style="left:686px;top:270px;width:1px;height:8px;background:#000;"></div>
<div class=a style="left:699px;top:207px;width:74px;height:71px;background:#fafafa;"></div>
<div class=t style="left:723.98px;top:209.76px;font-size:18px;line-height:18px;color:#000;-webkit-text-stroke:0.1px #000;">5/3</div>
<div class=t style="left:714.99px;top:231.76px;font-size:18px;line-height:18px;color:#000;-webkit-text-stroke:0.1px #000;">(Thu)</div>
<div class=a style="left:711px;top:270px;width:1px;height:8px;background:#000;"></div>
<div class=a style="left:724px;top:270px;width:1px;height:8px;background:#000;"></div>
<div class=a style="left:736px;top:270px;width:1px;height:8px;background:#000;"></div>
<div class=a style="left:749px;top:270px;width:1px;height:8px;background:#000;"></div>
<div class=a style="left:761px;top:270px;width:1px;height:8px;background:#000;"></div>
<div class=a style="left:774px;top:207px;width:74px;height:71px;background:#fafafa;"></div>
<div class=t style="left:798.98px;top:209.76px;font-size:18px;line-height:18px;color:#000;-webkit-text-stroke:0.1px #000;">6/3</div>
<div class=t style="left:795.01px;top:231.76px;font-size:18px;line-height:18px;color:#000;-webkit-text-stroke:0.1px #000;">(Fri)</div>
<div class=a style="left:786px;top:270px;width:1px;height:8px;background:#000;"></div>
<div class=a style="left:799px;top:270px;width:1px;height:8px;background:#000;"></div>
<div class=a style="left:811px;top:270px;width:1px;height:8px;background:#000;"></div>
<div class=a style="left:824px;top:270px;width:1px;height:8px;background:#000;"></div>
<div class=a style="left:836px;top:270px;width:1px;height:8px;background:#000;"></div>
<div class=a style="left:849px;top:207px;width:74px;height:71px;background:#f4f2f4;"></div>
<div class=t style="left:873.98px;top:209.76px;font-size:18px;line-height:18px;color:#8f8fb8;-webkit-text-stroke:0.1px #8f8fb8;">7/3</div>
<div class=t style="left:866.99px;top:231.76px;font-size:18px;line-height:18px;color:#8f8fb8;-webkit-text-stroke:0.1px #8f8fb8;">(Sat)</div>
<div class=a style="left:861px;top:270px;width:1px;height:8px;background:#8f8fb8;"></div>
<div class=a style="left:874px;top:270px;width:1px;height:8px;background:#8f8fb8;"></div>
<div class=a style="left:886px;top:270px;width:1px;height:8px;background:#8f8fb8;"></div>
<div class=a style="left:899px;top:270px;width:1px;height:8px;background:#8f8fb8;"></div>
<div class=a style="left:911px;top:270px;width:1px;height:8px;background:#8f8fb8;"></div>
<div class=a style="left:924px;top:207px;width:74px;height:71px;background:#f4f2f4;"></div>
<div class=t style="left:948.98px;top:209.76px;font-size:18px;line-height:18px;color:#b3607e;-webkit-text-stroke:0.1px #b3607e;">8/3</div>
<div class=t style="left:939.49px;top:231.76px;font-size:18px;line-height:18px;color:#b3607e;-webkit-text-stroke:0.1px #b3607e;">(Sun)</div>
<div class=a style="left:936px;top:270px;width:1px;height:8px;background:#b3607e;"></div>
<div class=a style="left:949px;top:270px;width:1px;height:8px;background:#b3607e;"></div>
<div class=a style="left:961px;top:270px;width:1px;height:8px;background:#b3607e;"></div>
<div class=a style="left:974px;top:270px;width:1px;height:8px;background:#b3607e;"></div>
<div class=a style="left:986px;top:270px;width:1px;height:8px;background:#b3607e;"></div>
<div class=a style="left:999px;top:207px;width:74px;height:71px;background:#fafafa;"></div>
<div class=t style="left:1023.98px;top:209.76px;font-size:18px;line-height:18px;color:#000;-webkit-text-stroke:0.1px #000;">9/3</div>
<div class=t style="left:1012.99px;top:231.76px;font-size:18px;line-height:18px;color:#000;-webkit-text-stroke:0.1px #000;">(Mon)</div>
<div class=a style="left:1011px;top:270px;width:1px;height:8px;background:#000;"></div>
<div class=a style="left:1024px;top:270px;width:1px;height:8px;background:#000;"></div>
<div class=a style="left:1036px;top:270px;width:1px;height:8px;background:#000;"></div>
<div class=a style="left:1049px;top:270px;width:1px;height:8px;background:#000;"></div>
<div class=a style="left:1061px;top:270px;width:1px;height:8px;background:#000;"></div>
<div class=a style="left:1074px;top:207px;width:74px;height:71px;background:#fafafa;"></div>
<div class=t style="left:1093.98px;top:209.76px;font-size:18px;line-height:18px;color:#000;-webkit-text-stroke:0.1px #000;">10/3</div>
<div class=t style="left:1090.33px;top:231.76px;font-size:18px;line-height:18px;color:#000;-webkit-text-stroke:0.1px #000;">(Tue)</div>
<div class=a style="left:1086px;top:270px;width:1px;height:8px;background:#000;"></div>
<div class=a style="left:1099px;top:270px;width:1px;height:8px;background:#000;"></div>
<div class=a style="left:1111px;top:270px;width:1px;height:8px;background:#000;"></div>
<div class=a style="left:1124px;top:270px;width:1px;height:8px;background:#000;"></div>
<div class=a style="left:1136px;top:270px;width:1px;height:8px;background:#000;"></div>
<div class=a style="left:1149px;top:207px;width:74px;height:71px;background:#fafafa;"></div>
<div class=t style="left:1169.65px;top:209.76px;font-size:18px;line-height:18px;color:#000;-webkit-text-stroke:0.1px #000;">11/3</div>
<div class=t style="left:1162.16px;top:231.76px;font-size:18px;line-height:18px;color:#000;-webkit-text-stroke:0.1px #000;">(Wed)</div>
<div class=a style="left:1161px;top:270px;width:1px;height:8px;background:#000;"></div>
<div class=a style="left:1174px;top:270px;width:1px;height:8px;background:#000;"></div>
<div class=a style="left:1186px;top:270px;width:1px;height:8px;background:#000;"></div>
<div class=a style="left:1199px;top:270px;width:1px;height:8px;background:#000;"></div>
<div class=a style="left:1211px;top:270px;width:1px;height:8px;background:#000;"></div>
<div class=a style="left:1224px;top:207px;width:74px;height:71px;background:#fafafa;"></div>
<div class=t style="left:1243.98px;top:209.76px;font-size:18px;line-height:18px;color:#000;-webkit-text-stroke:0.1px #000;">12/3</div>
<div class=t style="left:1239.99px;top:231.76px;font-size:18px;line-height:18px;color:#000;-webkit-text-stroke:0.1px #000;">(Thu)</div>
<div class=a style="left:1236px;top:270px;width:1px;height:8px;background:#000;"></div>
<div class=a style="left:1249px;top:270px;width:1px;height:8px;background:#000;"></div>
<div class=a style="left:1261px;top:270px;width:1px;height:8px;background:#000;"></div>
<div class=a style="left:1274px;top:270px;width:1px;height:8px;background:#000;"></div>
<div class=a style="left:1286px;top:270px;width:1px;height:8px;background:#000;"></div>
<div class=a style="left:1299px;top:207px;width:74px;height:71px;background:#fafafa;"></div>
<div class=t style="left:1318.98px;top:209.76px;font-size:18px;line-height:18px;color:#000;-webkit-text-stroke:0.1px #000;">13/3</div>
<div class=t style="left:1320.01px;top:231.76px;font-size:18px;line-height:18px;color:#000;-webkit-text-stroke:0.1px #000;">(Fri)</div>
<div class=a style="left:1311px;top:270px;width:1px;height:8px;background:#000;"></div>
<div class=a style="left:1324px;top:270px;width:1px;height:8px;background:#000;"></div>
<div class=a style="left:1336px;top:270px;width:1px;height:8px;background:#000;"></div>
<div class=a style="left:1349px;top:270px;width:1px;height:8px;background:#000;"></div>
<div class=a style="left:1361px;top:270px;width:1px;height:8px;background:#000;"></div>
<div class=a style="left:1374px;top:207px;width:74px;height:71px;background:#f4f2f4;"></div>
<div class=t style="left:1393.98px;top:209.76px;font-size:18px;line-height:18px;color:#8f8fb8;-webkit-text-stroke:0.1px #8f8fb8;">14/3</div>
<div class=t style="left:1391.99px;top:231.76px;font-size:18px;line-height:18px;color:#8f8fb8;-webkit-text-stroke:0.1px #8f8fb8;">(Sat)</div>
<div class=a style="left:1386px;top:270px;width:1px;height:8px;background:#8f8fb8;"></div>
<div class=a style="left:1399px;top:270px;width:1px;height:8px;background:#8f8fb8;"></div>
<div class=a style="left:1411px;top:270px;width:1px;height:8px;background:#8f8fb8;"></div>
<div class=a style="left:1424px;top:270px;width:1px;height:8px;background:#8f8fb8;"></div>
<div class=a style="left:1436px;top:270px;width:1px;height:8px;background:#8f8fb8;"></div>
<div class=a style="left:1449px;top:207px;width:13px;height:71px;background:#f4f2f4;"></div>
<div class=a style="left:399px;top:205px;width:1062px;height:2px;background:#9c9c9c;"></div>
<div class=a style="left:399px;top:278px;width:1062px;height:1px;background:#b8b8b8;"></div>
<div class=a style="left:399px;top:279px;width:1062px;height:51px;background:#feeedf;"></div>
<div class=a style="left:399px;top:330px;width:1062px;height:1px;background:#b8b8b8;"></div>
<div class=a style="left:399px;top:331px;width:1062px;height:447px;background:#ffffff;"></div>
<div class=a style="left:399px;top:386px;width:1062px;height:1px;background:#c4c4c4;"></div>
<div class=a style="left:399px;top:442px;width:1062px;height:1px;background:#c4c4c4;"></div>
<div class=a style="left:399px;top:498px;width:1062px;height:1px;background:#c4c4c4;"></div>
<div class=a style="left:399px;top:554px;width:1062px;height:1px;background:#c4c4c4;"></div>
<div class=a style="left:399px;top:610px;width:1062px;height:1px;background:#c4c4c4;"></div>
<div class=a style="left:399px;top:666px;width:1062px;height:1px;background:#c4c4c4;"></div>
<div class=a style="left:399px;top:722px;width:1062px;height:1px;background:#c4c4c4;"></div>
<div class=a style="left:399px;top:778px;width:1062px;height:1px;background:#c4c4c4;"></div>
<div class=a style="left:474px;top:338px;width:374px;height:41px;background:#dfe0e5;"></div>
<div class=a style="left:999px;top:338px;width:374px;height:41px;background:#dfe0e5;"></div>
<div class=a style="left:474px;top:394px;width:374px;height:41px;background:#dfe0e5;"></div>
<div class=a style="left:999px;top:394px;width:374px;height:41px;background:#dfe0e5;"></div>
<div class=a style="left:474px;top:450px;width:374px;height:41px;background:#dfe0e5;"></div>
<div class=a style="left:999px;top:450px;width:374px;height:41px;background:#dfe0e5;"></div>
<div class=a style="left:474px;top:506px;width:374px;height:41px;background:#dfe0e5;"></div>
<div class=a style="left:999px;top:506px;width:374px;height:41px;background:#dfe0e5;"></div>
<div class=a style="left:474px;top:562px;width:374px;height:41px;background:#dfe0e5;"></div>
<div class=a style="left:999px;top:562px;width:374px;height:41px;background:#dfe0e5;"></div>
<div class=a style="left:474px;top:618px;width:374px;height:41px;background:#dfe0e5;"></div>
<div class=a style="left:999px;top:618px;width:374px;height:41px;background:#dfe0e5;"></div>
<div class=a style="left:474px;top:674px;width:374px;height:41px;background:#dfe0e5;"></div>
<div class=a style="left:999px;top:674px;width:374px;height:41px;background:#dfe0e5;"></div>
<div class=a style="left:474px;top:730px;width:374px;height:41px;background:#dfe0e5;"></div>
<div class=a style="left:999px;top:730px;width:374px;height:41px;background:#dfe0e5;"></div>
<div class=a style="left:473px;top:207px;width:1px;height:571px;background:#c8c8c8;"></div>
<div class=a style="left:548px;top:207px;width:1px;height:571px;background:#c8c8c8;"></div>
<div class=a style="left:623px;top:207px;width:1px;height:571px;background:#c8c8c8;"></div>
<div class=a style="left:698px;top:207px;width:1px;height:571px;background:#c8c8c8;"></div>
<div class=a style="left:773px;top:207px;width:1px;height:571px;background:#c8c8c8;"></div>
<div class=a style="left:848px;top:207px;width:1px;height:571px;background:#c8c8c8;"></div>
<div class=a style="left:923px;top:207px;width:1px;height:571px;background:#c8c8c8;"></div>
<div class=a style="left:998px;top:207px;width:1px;height:571px;background:#c8c8c8;"></div>
<div class=a style="left:1073px;top:207px;width:1px;height:571px;background:#c8c8c8;"></div>
<div class=a style="left:1148px;top:207px;width:1px;height:571px;background:#c8c8c8;"></div>
<div class=a style="left:1223px;top:207px;width:1px;height:571px;background:#c8c8c8;"></div>
<div class=a style="left:1298px;top:207px;width:1px;height:571px;background:#c8c8c8;"></div>
<div class=a style="left:1373px;top:207px;width:1px;height:571px;background:#c8c8c8;"></div>
<div class=a style="left:1448px;top:207px;width:1px;height:571px;background:#c8c8c8;"></div>
<div class=a style="left:399px;top:779px;width:1062px;height:11px;background:#f0f0f0;"></div>
<div class=a style="left:399px;top:790px;width:1062px;height:1px;background:#ffffff;"></div>
<div class=a style="left:399px;top:791px;width:1062px;height:20px;background:#f0f0f0;"></div>
<div class=a style="left:553px;top:798px;width:377px;height:6px;background:#888888;"></div>
<div class=a style="left:4px;top:811px;width:1457px;height:1px;background:#ffffff;"></div>
<div class=a style="left:473px;top:337px;width:19px;height:43px;background:#8080ff;border:1px solid #5a5ae8;box-sizing:border-box;"></div>
<div class=t style="left:474.50px;top:341.84px;font-size:17.9px;line-height:17.9px;color:#000;-webkit-text-stroke:0.3px #000;">P000132</div>
<div class=t style="left:474.50px;top:362.84px;font-size:17.9px;line-height:17.9px;color:#000;-webkit-text-stroke:0.3px #000;">RM</div>
<div class=a style="left:476px;top:403px;width:16px;height:23px;background:#808080;border:1px solid #5c5c5c;box-sizing:border-box;"></div>
<div class=a style="left:476px;top:387px;width:16px;height:56px;overflow:hidden">
<div class=t style="left:1.50px;top:10.84px;font-size:17.9px;line-height:17.9px;color:#000;-webkit-text-stroke:0.3px #000;">04-Component1-MC</div>
<div class=t style="left:1.50px;top:31.84px;font-size:17.9px;line-height:17.9px;color:#000;-webkit-text-stroke:0.3px #000;">Component1-10</div>
</div>
<div class=a style="left:492px;top:393px;width:26px;height:43px;background:#f7587b;border:1px solid #d8365c;box-sizing:border-box;"></div>
<div class=a style="left:492px;top:387px;width:25px;height:56px;overflow:hidden">
<div class=t style="left:1.50px;top:10.84px;font-size:17.9px;line-height:17.9px;color:#000;-webkit-text-stroke:0.3px #000;">04-Component1-MC</div>
<div class=t style="left:1.50px;top:31.84px;font-size:17.9px;line-height:17.9px;color:#000;-webkit-text-stroke:0.3px #000;">Component1-10</div>
</div>
<div class=a style="left:517px;top:403px;width:16px;height:23px;background:#808080;border:1px solid #5c5c5c;box-sizing:border-box;"></div>
<div class=a style="left:517px;top:387px;width:16px;height:56px;overflow:hidden">
<div class=t style="left:1.50px;top:10.84px;font-size:17.9px;line-height:17.9px;color:#000;-webkit-text-stroke:0.3px #000;">04-Component2-MC</div>
<div class=t style="left:1.50px;top:31.84px;font-size:17.9px;line-height:17.9px;color:#000;-webkit-text-stroke:0.3px #000;">Component2-10</div>
</div>
<div class=a style="left:533px;top:393px;width:26px;height:43px;background:#26d3c7;border:1px solid #17a99f;box-sizing:border-box;"></div>
<div class=a style="left:533px;top:387px;width:26px;height:56px;overflow:hidden">
<div class=t style="left:1.50px;top:10.84px;font-size:17.9px;line-height:17.9px;color:#000;-webkit-text-stroke:0.3px #000;">04-Component2-MC</div>
<div class=t style="left:1.50px;top:31.84px;font-size:17.9px;line-height:17.9px;color:#000;-webkit-text-stroke:0.3px #000;">Component2-10</div>
</div>
<div class=a style="left:559px;top:403px;width:16px;height:23px;background:#808080;border:1px solid #5c5c5c;box-sizing:border-box;"></div>
<div class=a style="left:559px;top:387px;width:16px;height:56px;overflow:hidden">
<div class=t style="left:1.50px;top:10.84px;font-size:17.9px;line-height:17.9px;color:#000;-webkit-text-stroke:0.3px #000;">05-Component1-MC</div>
<div class=t style="left:1.50px;top:31.84px;font-size:17.9px;line-height:17.9px;color:#000;-webkit-text-stroke:0.3px #000;">Component1-10</div>
</div>
<div class=a style="left:575px;top:393px;width:26px;height:43px;background:#f7587b;border:1px solid #d8365c;box-sizing:border-box;"></div>
<div class=a style="left:575px;top:387px;width:26px;height:56px;overflow:hidden">
<div class=t style="left:1.50px;top:10.84px;font-size:17.9px;line-height:17.9px;color:#000;-webkit-text-stroke:0.3px #000;">05-Component1-MC</div>
<div class=t style="left:1.50px;top:31.84px;font-size:17.9px;line-height:17.9px;color:#000;-webkit-text-stroke:0.3px #000;">Component1-10</div>
</div>
<div class=a style="left:601px;top:403px;width:16px;height:23px;background:#808080;border:1px solid #5c5c5c;box-sizing:border-box;"></div>
<div class=a style="left:601px;top:387px;width:16px;height:56px;overflow:hidden">
<div class=t style="left:1.50px;top:10.84px;font-size:17.9px;line-height:17.9px;color:#000;-webkit-text-stroke:0.3px #000;">05-Component2-MC</div>
<div class=t style="left:1.50px;top:31.84px;font-size:17.9px;line-height:17.9px;color:#000;-webkit-text-stroke:0.3px #000;">Component2-10</div>
</div>
<div class=a style="left:617px;top:393px;width:26px;height:43px;background:#26d3c7;border:1px solid #17a99f;box-sizing:border-box;"></div>
<div class=a style="left:617px;top:387px;width:25px;height:56px;overflow:hidden">
<div class=t style="left:1.50px;top:10.84px;font-size:17.9px;line-height:17.9px;color:#000;-webkit-text-stroke:0.3px #000;">05-Component2-MC</div>
<div class=t style="left:1.50px;top:31.84px;font-size:17.9px;line-height:17.9px;color:#000;-webkit-text-stroke:0.3px #000;">Component2-10</div>
</div>
<div class=a style="left:642px;top:403px;width:16px;height:23px;background:#808080;border:1px solid #5c5c5c;box-sizing:border-box;"></div>
<div class=a style="left:642px;top:387px;width:16px;height:56px;overflow:hidden">
<div class=t style="left:1.50px;top:10.84px;font-size:17.9px;line-height:17.9px;color:#000;-webkit-text-stroke:0.3px #000;">06-Component1-MC</div>
<div class=t style="left:1.50px;top:31.84px;font-size:17.9px;line-height:17.9px;color:#000;-webkit-text-stroke:0.3px #000;">Component1-10</div>
</div>
<div class=a style="left:658px;top:393px;width:26px;height:43px;background:#f7587b;border:1px solid #d8365c;box-sizing:border-box;"></div>
<div class=a style="left:658px;top:387px;width:26px;height:56px;overflow:hidden">
<div class=t style="left:1.50px;top:10.84px;font-size:17.9px;line-height:17.9px;color:#000;-webkit-text-stroke:0.3px #000;">06-Component1-MC</div>
<div class=t style="left:1.50px;top:31.84px;font-size:17.9px;line-height:17.9px;color:#000;-webkit-text-stroke:0.3px #000;">Component1-10</div>
</div>
<div class=a style="left:684px;top:403px;width:16px;height:23px;background:#808080;border:1px solid #5c5c5c;box-sizing:border-box;"></div>
<div class=a style="left:684px;top:387px;width:16px;height:56px;overflow:hidden">
<div class=t style="left:1.50px;top:10.84px;font-size:17.9px;line-height:17.9px;color:#000;-webkit-text-stroke:0.3px #000;">06-Component2-MC</div>
<div class=t style="left:1.50px;top:31.84px;font-size:17.9px;line-height:17.9px;color:#000;-webkit-text-stroke:0.3px #000;">Component2-10</div>
</div>
<div class=a style="left:700px;top:393px;width:26px;height:43px;background:#26d3c7;border:1px solid #17a99f;box-sizing:border-box;"></div>
<div class=a style="left:700px;top:387px;width:26px;height:56px;overflow:hidden">
<div class=t style="left:1.50px;top:10.84px;font-size:17.9px;line-height:17.9px;color:#000;-webkit-text-stroke:0.3px #000;">06-Component2-MC</div>
<div class=t style="left:1.50px;top:31.84px;font-size:17.9px;line-height:17.9px;color:#000;-webkit-text-stroke:0.3px #000;">Component2-10</div>
</div>
<div class=a style="left:726px;top:403px;width:16px;height:23px;background:#808080;border:1px solid #5c5c5c;box-sizing:border-box;"></div>
<div class=a style="left:726px;top:387px;width:16px;height:56px;overflow:hidden">
<div class=t style="left:1.50px;top:10.84px;font-size:17.9px;line-height:17.9px;color:#000;-webkit-text-stroke:0.3px #000;">07-Component1-MC</div>
<div class=t style="left:1.50px;top:31.84px;font-size:17.9px;line-height:17.9px;color:#000;-webkit-text-stroke:0.3px #000;">Component1-10</div>
</div>
<div class=a style="left:742px;top:393px;width:26px;height:43px;background:#f7587b;border:1px solid #d8365c;box-sizing:border-box;"></div>
<div class=a style="left:742px;top:387px;width:25px;height:56px;overflow:hidden">
<div class=t style="left:1.50px;top:10.84px;font-size:17.9px;line-height:17.9px;color:#000;-webkit-text-stroke:0.3px #000;">07-Component1-MC</div>
<div class=t style="left:1.50px;top:31.84px;font-size:17.9px;line-height:17.9px;color:#000;-webkit-text-stroke:0.3px #000;">Component1-10</div>
</div>
<div class=a style="left:767px;top:403px;width:16px;height:23px;background:#808080;border:1px solid #5c5c5c;box-sizing:border-box;"></div>
<div class=a style="left:767px;top:387px;width:16px;height:56px;overflow:hidden">
<div class=t style="left:1.50px;top:10.84px;font-size:17.9px;line-height:17.9px;color:#000;-webkit-text-stroke:0.3px #000;">07-Component2-MC</div>
<div class=t style="left:1.50px;top:31.84px;font-size:17.9px;line-height:17.9px;color:#000;-webkit-text-stroke:0.3px #000;">Component2-10</div>
</div>
<div class=a style="left:783px;top:393px;width:26px;height:43px;background:#26d3c7;border:1px solid #17a99f;box-sizing:border-box;"></div>
<div class=a style="left:783px;top:387px;width:26px;height:56px;overflow:hidden">
<div class=t style="left:1.50px;top:10.84px;font-size:17.9px;line-height:17.9px;color:#000;-webkit-text-stroke:0.3px #000;">07-Component2-MC</div>
<div class=t style="left:1.50px;top:31.84px;font-size:17.9px;line-height:17.9px;color:#000;-webkit-text-stroke:0.3px #000;">Component2-10</div>
</div>
<div class=a style="left:809px;top:403px;width:16px;height:23px;background:#808080;border:1px solid #5c5c5c;box-sizing:border-box;"></div>
<div class=a style="left:809px;top:387px;width:16px;height:56px;overflow:hidden">
<div class=t style="left:1.50px;top:10.84px;font-size:17.9px;line-height:17.9px;color:#000;-webkit-text-stroke:0.3px #000;">01-Component1-MC</div>
<div class=t style="left:1.50px;top:31.84px;font-size:17.9px;line-height:17.9px;color:#000;-webkit-text-stroke:0.3px #000;">Component1-10</div>
</div>
<div class=a style="left:825px;top:393px;width:176px;height:43px;background:#f7587b;border:1px solid #d8365c;box-sizing:border-box;"></div>
<div class=a style="left:848px;top:393px;width:151px;height:38px;background:#ffffff;border-right:1px solid #d8365c;border-bottom:1px solid #d8365c;box-sizing:border-box;"></div>
<div class=a style="left:923px;top:393px;width:1px;height:37px;background:#c8c8c8;"></div>
<div class=a style="left:825px;top:387px;width:176px;height:56px;overflow:hidden">
<div class=t style="left:1.50px;top:10.84px;font-size:17.9px;line-height:17.9px;color:#000;-webkit-text-stroke:0.3px #000;">01-Component1-MC</div>
<div class=t style="left:1.50px;top:31.84px;font-size:17.9px;line-height:17.9px;color:#000;-webkit-text-stroke:0.3px #000;">Component1-10</div>
</div>
<div class=a style="left:1001px;top:403px;width:16px;height:23px;background:#808080;border:1px solid #5c5c5c;box-sizing:border-box;"></div>
<div class=a style="left:1001px;top:387px;width:16px;height:56px;overflow:hidden">
<div class=t style="left:1.50px;top:10.84px;font-size:17.9px;line-height:17.9px;color:#000;-webkit-text-stroke:0.3px #000;">01-Component2-MC</div>
<div class=t style="left:1.50px;top:31.84px;font-size:17.9px;line-height:17.9px;color:#000;-webkit-text-stroke:0.3px #000;">Component2-10</div>
</div>
<div class=a style="left:1017px;top:393px;width:26px;height:43px;background:#26d3c7;border:1px solid #17a99f;box-sizing:border-box;"></div>
<div class=a style="left:1017px;top:387px;width:25px;height:56px;overflow:hidden">
<div class=t style="left:1.50px;top:10.84px;font-size:17.9px;line-height:17.9px;color:#000;-webkit-text-stroke:0.3px #000;">01-Component2-MC</div>
<div class=t style="left:1.50px;top:31.84px;font-size:17.9px;line-height:17.9px;color:#000;-webkit-text-stroke:0.3px #000;">Component2-10</div>
</div>
<div class=a style="left:1042px;top:403px;width:16px;height:23px;background:#808080;border:1px solid #5c5c5c;box-sizing:border-box;"></div>
<div class=a style="left:1042px;top:387px;width:16px;height:56px;overflow:hidden">
<div class=t style="left:1.50px;top:10.84px;font-size:17.9px;line-height:17.9px;color:#000;-webkit-text-stroke:0.3px #000;">02-Component1-MC</div>
<div class=t style="left:1.50px;top:31.84px;font-size:17.9px;line-height:17.9px;color:#000;-webkit-text-stroke:0.3px #000;">Component1-10</div>
</div>
<div class=a style="left:1058px;top:393px;width:26px;height:43px;background:#f7587b;border:1px solid #d8365c;box-sizing:border-box;"></div>
<div class=a style="left:1058px;top:387px;width:26px;height:56px;overflow:hidden">
<div class=t style="left:1.50px;top:10.84px;font-size:17.9px;line-height:17.9px;color:#000;-webkit-text-stroke:0.3px #000;">02-Component1-MC</div>
<div class=t style="left:1.50px;top:31.84px;font-size:17.9px;line-height:17.9px;color:#000;-webkit-text-stroke:0.3px #000;">Component1-10</div>
</div>
<div class=a style="left:1084px;top:403px;width:16px;height:23px;background:#808080;border:1px solid #5c5c5c;box-sizing:border-box;"></div>
<div class=a style="left:1084px;top:387px;width:16px;height:56px;overflow:hidden">
<div class=t style="left:1.50px;top:10.84px;font-size:17.9px;line-height:17.9px;color:#000;-webkit-text-stroke:0.3px #000;">02-Component2-MC</div>
<div class=t style="left:1.50px;top:31.84px;font-size:17.9px;line-height:17.9px;color:#000;-webkit-text-stroke:0.3px #000;">Component2-10</div>
</div>
<div class=a style="left:1100px;top:393px;width:26px;height:43px;background:#26d3c7;border:1px solid #17a99f;box-sizing:border-box;"></div>
<div class=a style="left:1100px;top:387px;width:26px;height:56px;overflow:hidden">
<div class=t style="left:1.50px;top:10.84px;font-size:17.9px;line-height:17.9px;color:#000;-webkit-text-stroke:0.3px #000;">02-Component2-MC</div>
<div class=t style="left:1.50px;top:31.84px;font-size:17.9px;line-height:17.9px;color:#000;-webkit-text-stroke:0.3px #000;">Component2-10</div>
</div>
<div class=a style="left:1126px;top:403px;width:16px;height:23px;background:#808080;border:1px solid #5c5c5c;box-sizing:border-box;"></div>
<div class=a style="left:1126px;top:387px;width:16px;height:56px;overflow:hidden">
<div class=t style="left:1.50px;top:10.84px;font-size:17.9px;line-height:17.9px;color:#000;-webkit-text-stroke:0.3px #000;">03-Component1-MC</div>
<div class=t style="left:1.50px;top:31.84px;font-size:17.9px;line-height:17.9px;color:#000;-webkit-text-stroke:0.3px #000;">Component1-10</div>
</div>
<div class=a style="left:1142px;top:393px;width:26px;height:43px;background:#f7587b;border:1px solid #d8365c;box-sizing:border-box;"></div>
<div class=a style="left:1142px;top:387px;width:25px;height:56px;overflow:hidden">
<div class=t style="left:1.50px;top:10.84px;font-size:17.9px;line-height:17.9px;color:#000;-webkit-text-stroke:0.3px #000;">03-Component1-MC</div>
<div class=t style="left:1.50px;top:31.84px;font-size:17.9px;line-height:17.9px;color:#000;-webkit-text-stroke:0.3px #000;">Component1-10</div>
</div>
<div class=a style="left:1167px;top:403px;width:16px;height:23px;background:#808080;border:1px solid #5c5c5c;box-sizing:border-box;"></div>
<div class=a style="left:1167px;top:387px;width:16px;height:56px;overflow:hidden">
<div class=t style="left:1.50px;top:10.84px;font-size:17.9px;line-height:17.9px;color:#000;-webkit-text-stroke:0.3px #000;">03-Component2-MC</div>
<div class=t style="left:1.50px;top:31.84px;font-size:17.9px;line-height:17.9px;color:#000;-webkit-text-stroke:0.3px #000;">Component2-10</div>
</div>
<div class=a style="left:1183px;top:393px;width:26px;height:43px;background:#26d3c7;border:1px solid #17a99f;box-sizing:border-box;"></div>
<div class=t style="left:1184.50px;top:397.84px;font-size:17.9px;line-height:17.9px;color:#000;-webkit-text-stroke:0.3px #000;">03-Component2-MC</div>
<div class=t style="left:1184.50px;top:418.84px;font-size:17.9px;line-height:17.9px;color:#000;-webkit-text-stroke:0.3px #000;">Component2-10</div>
<div class=a style="left:502px;top:459px;width:16px;height:23px;background:#808080;border:1px solid #5c5c5c;box-sizing:border-box;"></div>
<div class=a style="left:502px;top:443px;width:16px;height:56px;overflow:hidden">
<div class=t style="left:1.50px;top:10.84px;font-size:17.9px;line-height:17.9px;color:#000;-webkit-text-stroke:0.3px #000;">04-Component1-MC</div>
<div class=t style="left:1.50px;top:31.84px;font-size:17.9px;line-height:17.9px;color:#000;-webkit-text-stroke:0.3px #000;">Component1-20</div>
</div>
<div class=a style="left:518px;top:449px;width:26px;height:43px;background:#f7587b;border:1px solid #d8365c;box-sizing:border-box;"></div>
<div class=a style="left:518px;top:443px;width:25px;height:56px;overflow:hidden">
<div class=t style="left:1.50px;top:10.84px;font-size:17.9px;line-height:17.9px;color:#000;-webkit-text-stroke:0.3px #000;">04-Component1-MC</div>
<div class=t style="left:1.50px;top:31.84px;font-size:17.9px;line-height:17.9px;color:#000;-webkit-text-stroke:0.3px #000;">Component1-20</div>
</div>
<div class=a style="left:543px;top:459px;width:16px;height:23px;background:#808080;border:1px solid #5c5c5c;box-sizing:border-box;"></div>
<div class=a style="left:543px;top:443px;width:16px;height:56px;overflow:hidden">
<div class=t style="left:1.50px;top:10.84px;font-size:17.9px;line-height:17.9px;color:#000;-webkit-text-stroke:0.3px #000;">04-Component2-MC</div>
<div class=t style="left:1.50px;top:31.84px;font-size:17.9px;line-height:17.9px;color:#000;-webkit-text-stroke:0.3px #000;">Component2-20</div>
</div>
<div class=a style="left:559px;top:449px;width:26px;height:43px;background:#26d3c7;border:1px solid #17a99f;box-sizing:border-box;"></div>
<div class=a style="left:559px;top:443px;width:26px;height:56px;overflow:hidden">
<div class=t style="left:1.50px;top:10.84px;font-size:17.9px;line-height:17.9px;color:#000;-webkit-text-stroke:0.3px #000;">04-Component2-MC</div>
<div class=t style="left:1.50px;top:31.84px;font-size:17.9px;line-height:17.9px;color:#000;-webkit-text-stroke:0.3px #000;">Component2-20</div>
</div>
<div class=a style="left:585px;top:459px;width:16px;height:23px;background:#808080;border:1px solid #5c5c5c;box-sizing:border-box;"></div>
<div class=a style="left:585px;top:443px;width:16px;height:56px;overflow:hidden">
<div class=t style="left:1.50px;top:10.84px;font-size:17.9px;line-height:17.9px;color:#000;-webkit-text-stroke:0.3px #000;">05-Component1-MC</div>
<div class=t style="left:1.50px;top:31.84px;font-size:17.9px;line-height:17.9px;color:#000;-webkit-text-stroke:0.3px #000;">Component1-20</div>
</div>
<div class=a style="left:601px;top:449px;width:26px;height:43px;background:#f7587b;border:1px solid #d8365c;box-sizing:border-box;"></div>
<div class=a style="left:601px;top:443px;width:26px;height:56px;overflow:hidden">
<div class=t style="left:1.50px;top:10.84px;font-size:17.9px;line-height:17.9px;color:#000;-webkit-text-stroke:0.3px #000;">05-Component1-MC</div>
<div class=t style="left:1.50px;top:31.84px;font-size:17.9px;line-height:17.9px;color:#000;-webkit-text-stroke:0.3px #000;">Component1-20</div>
</div>
<div class=a style="left:627px;top:459px;width:16px;height:23px;background:#808080;border:1px solid #5c5c5c;box-sizing:border-box;"></div>
<div class=a style="left:627px;top:443px;width:16px;height:56px;overflow:hidden">
<div class=t style="left:1.50px;top:10.84px;font-size:17.9px;line-height:17.9px;color:#000;-webkit-text-stroke:0.3px #000;">05-Component2-MC</div>
<div class=t style="left:1.50px;top:31.84px;font-size:17.9px;line-height:17.9px;color:#000;-webkit-text-stroke:0.3px #000;">Component2-20</div>
</div>
<div class=a style="left:643px;top:449px;width:26px;height:43px;background:#26d3c7;border:1px solid #17a99f;box-sizing:border-box;"></div>
<div class=a style="left:643px;top:443px;width:25px;height:56px;overflow:hidden">
</div>
<div class=a style="left:668px;top:459px;width:16px;height:23px;background:#808080;border:1px solid #5c5c5c;box-sizing:border-box;"></div>
<div class=a style="left:668px;top:443px;width:16px;height:56px;overflow:hidden">
<div class=t style="left:1.50px;top:10.84px;font-size:17.9px;line-height:17.9px;color:#000;-webkit-text-stroke:0.3px #000;">06-Component1-MC</div>
<div class=t style="left:1.50px;top:31.84px;font-size:17.9px;line-height:17.9px;color:#000;-webkit-text-stroke:0.3px #000;">Component1-20</div>
</div>
<div class=a style="left:684px;top:449px;width:26px;height:43px;background:#f7587b;border:1px solid #d8365c;box-sizing:border-box;"></div>
<div class=a style="left:684px;top:443px;width:26px;height:56px;overflow:hidden">
<div class=t style="left:1.50px;top:10.84px;font-size:17.9px;line-height:17.9px;color:#000;-webkit-text-stroke:0.3px #000;">06-Component1-MC</div>
<div class=t style="left:1.50px;top:31.84px;font-size:17.9px;line-height:17.9px;color:#000;-webkit-text-stroke:0.3px #000;">Component1-20</div>
</div>
<div class=a style="left:710px;top:459px;width:16px;height:23px;background:#808080;border:1px solid #5c5c5c;box-sizing:border-box;"></div>
<div class=a style="left:710px;top:443px;width:16px;height:56px;overflow:hidden">
<div class=t style="left:1.50px;top:10.84px;font-size:17.9px;line-height:17.9px;color:#000;-webkit-text-stroke:0.3px #000;">06-Component2-MC</div>
<div class=t style="left:1.50px;top:31.84px;font-size:17.9px;line-height:17.9px;color:#000;-webkit-text-stroke:0.3px #000;">Component2-20</div>
</div>
<div class=a style="left:726px;top:449px;width:26px;height:43px;background:#26d3c7;border:1px solid #17a99f;box-sizing:border-box;"></div>
<div class=a style="left:726px;top:443px;width:26px;height:56px;overflow:hidden">
<div class=t style="left:1.50px;top:10.84px;font-size:17.9px;line-height:17.9px;color:#000;-webkit-text-stroke:0.3px #000;">06-Component2-MC</div>
<div class=t style="left:1.50px;top:31.84px;font-size:17.9px;line-height:17.9px;color:#000;-webkit-text-stroke:0.3px #000;">Component2-20</div>
</div>
<div class=a style="left:752px;top:459px;width:16px;height:23px;background:#808080;border:1px solid #5c5c5c;box-sizing:border-box;"></div>
<div class=a style="left:752px;top:443px;width:16px;height:56px;overflow:hidden">
<div class=t style="left:1.50px;top:10.84px;font-size:17.9px;line-height:17.9px;color:#000;-webkit-text-stroke:0.3px #000;">07-Component1-MC</div>
<div class=t style="left:1.50px;top:31.84px;font-size:17.9px;line-height:17.9px;color:#000;-webkit-text-stroke:0.3px #000;">Component1-20</div>
</div>
<div class=a style="left:768px;top:449px;width:26px;height:43px;background:#f7587b;border:1px solid #d8365c;box-sizing:border-box;"></div>
<div class=a style="left:768px;top:443px;width:25px;height:56px;overflow:hidden">
<div class=t style="left:1.50px;top:10.84px;font-size:17.9px;line-height:17.9px;color:#000;-webkit-text-stroke:0.3px #000;">07-Component1-MC</div>
<div class=t style="left:1.50px;top:31.84px;font-size:17.9px;line-height:17.9px;color:#000;-webkit-text-stroke:0.3px #000;">Component1-20</div>
</div>
<div class=a style="left:793px;top:459px;width:16px;height:23px;background:#808080;border:1px solid #5c5c5c;box-sizing:border-box;"></div>
<div class=a style="left:793px;top:443px;width:16px;height:56px;overflow:hidden">
<div class=t style="left:1.50px;top:10.84px;font-size:17.9px;line-height:17.9px;color:#000;-webkit-text-stroke:0.3px #000;">07-Component2-MC</div>
<div class=t style="left:1.50px;top:31.84px;font-size:17.9px;line-height:17.9px;color:#000;-webkit-text-stroke:0.3px #000;">Component2-20</div>
</div>
<div class=a style="left:809px;top:449px;width:26px;height:43px;background:#26d3c7;border:1px solid #17a99f;box-sizing:border-box;"></div>
<div class=a style="left:809px;top:443px;width:26px;height:56px;overflow:hidden">
<div class=t style="left:1.50px;top:10.84px;font-size:17.9px;line-height:17.9px;color:#000;-webkit-text-stroke:0.3px #000;">07-Component2-MC</div>
<div class=t style="left:1.50px;top:31.84px;font-size:17.9px;line-height:17.9px;color:#000;-webkit-text-stroke:0.3px #000;">Component2-20</div>
</div>
<div class=a style="left:835px;top:459px;width:166px;height:23px;background:#808080;border:1px solid #5c5c5c;box-sizing:border-box;"></div>
<div class=a style="left:848px;top:459px;width:151px;height:18px;background:#ffffff;border-right:1px solid #5c5c5c;border-bottom:1px solid #5c5c5c;box-sizing:border-box;"></div>
<div class=a style="left:923px;top:459px;width:1px;height:17px;background:#c8c8c8;"></div>
<div class=a style="left:835px;top:443px;width:166px;height:56px;overflow:hidden">
<div class=t style="left:1.50px;top:10.84px;font-size:17.9px;line-height:17.9px;color:#000;-webkit-text-stroke:0.3px #000;">01-Component1-MC</div>
<div class=t style="left:1.50px;top:31.84px;font-size:17.9px;line-height:17.9px;color:#000;-webkit-text-stroke:0.3px #000;">Component1-20</div>
</div>
<div class=a style="left:1001px;top:449px;width:26px;height:43px;background:#f7587b;border:1px solid #d8365c;box-sizing:border-box;"></div>
<div class=a style="left:1001px;top:443px;width:26px;height:56px;overflow:hidden">
<div class=t style="left:1.50px;top:10.84px;font-size:17.9px;line-height:17.9px;color:#000;-webkit-text-stroke:0.3px #000;">01-Component1-MC</div>
<div class=t style="left:1.50px;top:31.84px;font-size:17.9px;line-height:17.9px;color:#000;-webkit-text-stroke:0.3px #000;">Component1-20</div>
</div>
<div class=a style="left:1027px;top:459px;width:16px;height:23px;background:#808080;border:1px solid #5c5c5c;box-sizing:border-box;"></div>
<div class=a style="left:1027px;top:443px;width:16px;height:56px;overflow:hidden">
<div class=t style="left:1.50px;top:10.84px;font-size:17.9px;line-height:17.9px;color:#000;-webkit-text-stroke:0.3px #000;">01-Component2-MC</div>
<div class=t style="left:1.50px;top:31.84px;font-size:17.9px;line-height:17.9px;color:#000;-webkit-text-stroke:0.3px #000;">Component2-20</div>
</div>
<div class=a style="left:1043px;top:449px;width:26px;height:43px;background:#26d3c7;border:1px solid #17a99f;box-sizing:border-box;"></div>
<div class=a style="left:1043px;top:443px;width:25px;height:56px;overflow:hidden">
<div class=t style="left:1.50px;top:10.84px;font-size:17.9px;line-height:17.9px;color:#000;-webkit-text-stroke:0.3px #000;">01-Component2-MC</div>
<div class=t style="left:1.50px;top:31.84px;font-size:17.9px;line-height:17.9px;color:#000;-webkit-text-stroke:0.3px #000;">Component2-20</div>
</div>
<div class=a style="left:1068px;top:459px;width:16px;height:23px;background:#808080;border:1px solid #5c5c5c;box-sizing:border-box;"></div>
<div class=a style="left:1068px;top:443px;width:16px;height:56px;overflow:hidden">
<div class=t style="left:1.50px;top:10.84px;font-size:17.9px;line-height:17.9px;color:#000;-webkit-text-stroke:0.3px #000;">02-Component1-MC</div>
<div class=t style="left:1.50px;top:31.84px;font-size:17.9px;line-height:17.9px;color:#000;-webkit-text-stroke:0.3px #000;">Component1-20</div>
</div>
<div class=a style="left:1084px;top:449px;width:26px;height:43px;background:#f7587b;border:1px solid #d8365c;box-sizing:border-box;"></div>
<div class=a style="left:1084px;top:443px;width:26px;height:56px;overflow:hidden">
<div class=t style="left:1.50px;top:10.84px;font-size:17.9px;line-height:17.9px;color:#000;-webkit-text-stroke:0.3px #000;">02-Component1-MC</div>
<div class=t style="left:1.50px;top:31.84px;font-size:17.9px;line-height:17.9px;color:#000;-webkit-text-stroke:0.3px #000;">Component1-20</div>
</div>
<div class=a style="left:1110px;top:459px;width:16px;height:23px;background:#808080;border:1px solid #5c5c5c;box-sizing:border-box;"></div>
<div class=a style="left:1110px;top:443px;width:16px;height:56px;overflow:hidden">
<div class=t style="left:1.50px;top:10.84px;font-size:17.9px;line-height:17.9px;color:#000;-webkit-text-stroke:0.3px #000;">02-Component2-MC</div>
<div class=t style="left:1.50px;top:31.84px;font-size:17.9px;line-height:17.9px;color:#000;-webkit-text-stroke:0.3px #000;">Component2-20</div>
</div>
<div class=a style="left:1126px;top:449px;width:26px;height:43px;background:#26d3c7;border:1px solid #17a99f;box-sizing:border-box;"></div>
<div class=a style="left:1126px;top:443px;width:26px;height:56px;overflow:hidden">
<div class=t style="left:1.50px;top:10.84px;font-size:17.9px;line-height:17.9px;color:#000;-webkit-text-stroke:0.3px #000;">02-Component2-MC</div>
<div class=t style="left:1.50px;top:31.84px;font-size:17.9px;line-height:17.9px;color:#000;-webkit-text-stroke:0.3px #000;">Component2-20</div>
</div>
<div class=a style="left:1152px;top:459px;width:16px;height:23px;background:#808080;border:1px solid #5c5c5c;box-sizing:border-box;"></div>
<div class=a style="left:1152px;top:443px;width:16px;height:56px;overflow:hidden">
<div class=t style="left:1.50px;top:10.84px;font-size:17.9px;line-height:17.9px;color:#000;-webkit-text-stroke:0.3px #000;">03-Component1-MC</div>
<div class=t style="left:1.50px;top:31.84px;font-size:17.9px;line-height:17.9px;color:#000;-webkit-text-stroke:0.3px #000;">Component1-20</div>
</div>
<div class=a style="left:1168px;top:449px;width:26px;height:43px;background:#f7587b;border:1px solid #d8365c;box-sizing:border-box;"></div>
<div class=a style="left:1168px;top:443px;width:26px;height:56px;overflow:hidden">
<div class=t style="left:1.50px;top:10.84px;font-size:17.9px;line-height:17.9px;color:#000;-webkit-text-stroke:0.3px #000;">03-Component1-MC</div>
<div class=t style="left:1.50px;top:31.84px;font-size:17.9px;line-height:17.9px;color:#000;-webkit-text-stroke:0.3px #000;">Component1-20</div>
</div>
<div class=a style="left:1194px;top:459px;width:16px;height:23px;background:#808080;border:1px solid #5c5c5c;box-sizing:border-box;"></div>
<div class=a style="left:1194px;top:443px;width:15px;height:56px;overflow:hidden">
<div class=t style="left:1.50px;top:10.84px;font-size:17.9px;line-height:17.9px;color:#000;-webkit-text-stroke:0.3px #000;">03-Component2-MC</div>
<div class=t style="left:1.50px;top:31.84px;font-size:17.9px;line-height:17.9px;color:#000;-webkit-text-stroke:0.3px #000;">Component2-20</div>
</div>
<div class=a style="left:1209px;top:449px;width:26px;height:43px;background:#26d3c7;border:1px solid #17a99f;box-sizing:border-box;"></div>
<div class=t style="left:1211.30px;top:453.84px;font-size:17.9px;line-height:17.9px;color:#e0282c;font-weight:700;text-shadow:1px 0 #fff,-1px 0 #fff,0 1px #fff,0 -1px #fff,1px 1px #fff,-1px -1px #fff,1px -1px #fff,-1px 1px #fff;">03-Component2-MC</div>
<div class=t style="left:1211.30px;top:474.84px;font-size:17.9px;line-height:17.9px;color:#e0282c;font-weight:700;text-shadow:1px 0 #fff,-1px 0 #fff,0 1px #fff,0 -1px #fff,1px 1px #fff,-1px -1px #fff,1px -1px #fff,-1px 1px #fff;">Component2-20</div>
<div class=a style="left:1231px;top:488px;width:6px;height:6px;background:#e0282c;border-radius:50%;"></div>
<div class=a style="left:645px;top:450px;width:22px;height:41px;border:3px solid #fdf8c0;box-sizing:border-box;"></div>
<div class=t style="left:644.50px;top:453.84px;font-size:17.9px;line-height:17.9px;color:#000;-webkit-text-stroke:0.3px #000;">05-Component2-MC</div>
<div class=t style="left:644.50px;top:474.84px;font-size:17.9px;line-height:17.9px;color:#000;-webkit-text-stroke:0.3px #000;">Component2-20</div>
<div class=a style="left:641px;top:465px;width:6px;height:7px;background:#f07818;border:1px solid #fff;box-sizing:border-box;"></div>
<div class=a style="left:665px;top:465px;width:6px;height:7px;background:#f07818;border:1px solid #fff;box-sizing:border-box;"></div>
<div class=a style="left:544px;top:505px;width:26px;height:43px;background:#f7587b;border:1px solid #d8365c;box-sizing:border-box;"></div>
<div class=a style="left:544px;top:499px;width:68px;height:56px;overflow:hidden">
<div class=t style="left:1.50px;top:10.84px;font-size:17.9px;line-height:17.9px;color:#000;-webkit-text-stroke:0.3px #000;">04-Component1-MC</div>
<div class=t style="left:1.50px;top:31.84px;font-size:17.9px;line-height:17.9px;color:#000;-webkit-text-stroke:0.3px #000;">Component1-MC</div>
</div>
<div class=a style="left:612px;top:505px;width:26px;height:43px;background:#8080ff;border:1px solid #5a5ae8;box-sizing:border-box;"></div>
<div class=a style="left:612px;top:499px;width:57px;height:56px;overflow:hidden">
<div class=t style="left:1.50px;top:10.84px;font-size:17.9px;line-height:17.9px;color:#000;-webkit-text-stroke:0.3px #000;">04-MC-Die Casting</div>
<div class=t style="left:1.50px;top:31.84px;font-size:17.9px;line-height:17.9px;color:#000;-webkit-text-stroke:0.3px #000;">MC-Die Casting</div>
</div>
<div class=a style="left:669px;top:505px;width:26px;height:43px;background:#26d3c7;border:1px solid #17a99f;box-sizing:border-box;"></div>
<div class=a style="left:669px;top:499px;width:42px;height:56px;overflow:hidden">
<div class=t style="left:1.50px;top:10.84px;font-size:17.9px;line-height:17.9px;color:#000;-webkit-text-stroke:0.3px #000;">05-Component2-MC</div>
<div class=t style="left:1.50px;top:31.84px;font-size:17.9px;line-height:17.9px;color:#000;-webkit-text-stroke:0.3px #000;">Component2-MC</div>
</div>
<div class=a style="left:711px;top:505px;width:26px;height:43px;background:#f7587b;border:1px solid #d8365c;box-sizing:border-box;"></div>
<div class=a style="left:711px;top:499px;width:67px;height:56px;overflow:hidden">
<div class=t style="left:1.50px;top:10.84px;font-size:17.9px;line-height:17.9px;color:#000;-webkit-text-stroke:0.3px #000;">06-Component1-MC</div>
<div class=t style="left:1.50px;top:31.84px;font-size:17.9px;line-height:17.9px;color:#000;-webkit-text-stroke:0.3px #000;">Component1-MC</div>
</div>
<div class=a style="left:778px;top:505px;width:26px;height:43px;background:#8080ff;border:1px solid #5a5ae8;box-sizing:border-box;"></div>
<div class=a style="left:778px;top:499px;width:58px;height:56px;overflow:hidden">
<div class=t style="left:1.50px;top:10.84px;font-size:17.9px;line-height:17.9px;color:#000;-webkit-text-stroke:0.3px #000;">06-MC-Die Casting</div>
<div class=t style="left:1.50px;top:31.84px;font-size:17.9px;line-height:17.9px;color:#000;-webkit-text-stroke:0.3px #000;">MC-Die Casting</div>
</div>
<div class=a style="left:836px;top:505px;width:176px;height:43px;background:#26d3c7;border:1px solid #17a99f;box-sizing:border-box;"></div>
<div class=a style="left:848px;top:505px;width:151px;height:38px;background:#ffffff;border-right:1px solid #17a99f;border-bottom:1px solid #17a99f;box-sizing:border-box;"></div>
<div class=a style="left:923px;top:505px;width:1px;height:37px;background:#c8c8c8;"></div>
<div class=a style="left:836px;top:499px;width:191px;height:56px;overflow:hidden">
<div class=t style="left:1.50px;top:10.84px;font-size:17.9px;line-height:17.9px;color:#000;-webkit-text-stroke:0.3px #000;">07-Component2-MC</div>
<div class=t style="left:1.50px;top:31.84px;font-size:17.9px;line-height:17.9px;color:#000;-webkit-text-stroke:0.3px #000;">Component2-MC</div>
</div>
<div class=a style="left:1027px;top:505px;width:26px;height:43px;background:#f7587b;border:1px solid #d8365c;box-sizing:border-box;"></div>
<div class=a style="left:1027px;top:499px;width:68px;height:56px;overflow:hidden">
<div class=t style="left:1.50px;top:10.84px;font-size:17.9px;line-height:17.9px;color:#000;-webkit-text-stroke:0.3px #000;">01-Component1-MC</div>
<div class=t style="left:1.50px;top:31.84px;font-size:17.9px;line-height:17.9px;color:#000;-webkit-text-stroke:0.3px #000;">Component1-MC</div>
</div>
<div class=a style="left:1095px;top:505px;width:26px;height:43px;background:#8080ff;border:1px solid #5a5ae8;box-sizing:border-box;"></div>
<div class=a style="left:1095px;top:499px;width:57px;height:56px;overflow:hidden">
<div class=t style="left:1.50px;top:10.84px;font-size:17.9px;line-height:17.9px;color:#000;-webkit-text-stroke:0.3px #000;">01-MC-Die Casting</div>
<div class=t style="left:1.50px;top:31.84px;font-size:17.9px;line-height:17.9px;color:#000;-webkit-text-stroke:0.3px #000;">MC-Die Casting</div>
</div>
<div class=a style="left:1152px;top:505px;width:26px;height:43px;background:#26d3c7;border:1px solid #17a99f;box-sizing:border-box;"></div>
<div class=a style="left:1152px;top:499px;width:42px;height:56px;overflow:hidden">
<div class=t style="left:1.50px;top:10.84px;font-size:17.9px;line-height:17.9px;color:#000;-webkit-text-stroke:0.3px #000;">02-Component2-MC</div>
<div class=t style="left:1.50px;top:31.84px;font-size:17.9px;line-height:17.9px;color:#000;-webkit-text-stroke:0.3px #000;">Component2-MC</div>
</div>
<div class=a style="left:1194px;top:505px;width:26px;height:43px;background:#f7587b;border:1px solid #d8365c;box-sizing:border-box;"></div>
<div class=a style="left:1194px;top:499px;width:68px;height:56px;overflow:hidden">
<div class=t style="left:1.50px;top:10.84px;font-size:17.9px;line-height:17.9px;color:#000;-webkit-text-stroke:0.3px #000;">03-Component1-MC</div>
<div class=t style="left:1.50px;top:31.84px;font-size:17.9px;line-height:17.9px;color:#000;-webkit-text-stroke:0.3px #000;">Component1-MC</div>
</div>
<div class=a style="left:1262px;top:505px;width:26px;height:43px;background:#8080ff;border:1px solid #5a5ae8;box-sizing:border-box;"></div>
<div class=t style="left:1264.30px;top:509.84px;font-size:17.9px;line-height:17.9px;color:#e0282c;font-weight:700;text-shadow:1px 0 #fff,-1px 0 #fff,0 1px #fff,0 -1px #fff,1px 1px #fff,-1px -1px #fff,1px -1px #fff,-1px 1px #fff;">03-MC-Die Casting</div>
<div class=t style="left:1264.30px;top:530.84px;font-size:17.9px;line-height:17.9px;color:#e0282c;font-weight:700;text-shadow:1px 0 #fff,-1px 0 #fff,0 1px #fff,0 -1px #fff,1px 1px #fff,-1px -1px #fff,1px -1px #fff,-1px 1px #fff;">MC-Die Casting-40</div>
<div class=a style="left:1284px;top:544px;width:6px;height:6px;background:#e0282c;border-radius:50%;"></div>
<div class=a style="left:586px;top:561px;width:26px;height:43px;background:#26d3c7;border:1px solid #17a99f;box-sizing:border-box;"></div>
<div class=a style="left:586px;top:555px;width:41px;height:56px;overflow:hidden">
<div class=t style="left:1.50px;top:10.84px;font-size:17.9px;line-height:17.9px;color:#000;-webkit-text-stroke:0.3px #000;">04-Component2-MC</div>
<div class=t style="left:1.50px;top:31.84px;font-size:17.9px;line-height:17.9px;color:#000;-webkit-text-stroke:0.3px #000;">Component2-MC</div>
</div>
<div class=a style="left:627px;top:561px;width:26px;height:43px;background:#f7587b;border:1px solid #d8365c;box-sizing:border-box;"></div>
<div class=a style="left:627px;top:555px;width:68px;height:56px;overflow:hidden">
<div class=t style="left:1.50px;top:10.84px;font-size:17.9px;line-height:17.9px;color:#000;-webkit-text-stroke:0.3px #000;">05-Component1-MC</div>
<div class=t style="left:1.50px;top:31.84px;font-size:17.9px;line-height:17.9px;color:#000;-webkit-text-stroke:0.3px #000;">Component1-MC</div>
</div>
<div class=a style="left:695px;top:561px;width:26px;height:43px;background:#8080ff;border:1px solid #5a5ae8;box-sizing:border-box;"></div>
<div class=a style="left:695px;top:555px;width:57px;height:56px;overflow:hidden">
<div class=t style="left:1.50px;top:10.84px;font-size:17.9px;line-height:17.9px;color:#000;-webkit-text-stroke:0.3px #000;">05-MC-Die Casting</div>
<div class=t style="left:1.50px;top:31.84px;font-size:17.9px;line-height:17.9px;color:#000;-webkit-text-stroke:0.3px #000;">MC-Die Casting</div>
</div>
<div class=a style="left:752px;top:561px;width:26px;height:43px;background:#26d3c7;border:1px solid #17a99f;box-sizing:border-box;"></div>
<div class=a style="left:752px;top:555px;width:42px;height:56px;overflow:hidden">
<div class=t style="left:1.50px;top:10.84px;font-size:17.9px;line-height:17.9px;color:#000;-webkit-text-stroke:0.3px #000;">06-Component2-MC</div>
<div class=t style="left:1.50px;top:31.84px;font-size:17.9px;line-height:17.9px;color:#000;-webkit-text-stroke:0.3px #000;">Component2-MC</div>
</div>
<div class=a style="left:794px;top:561px;width:26px;height:43px;background:#f7587b;border:1px solid #d8365c;box-sizing:border-box;"></div>
<div class=a style="left:794px;top:555px;width:218px;height:56px;overflow:hidden">
<div class=t style="left:1.50px;top:10.84px;font-size:17.9px;line-height:17.9px;color:#000;-webkit-text-stroke:0.3px #000;">07-Component1-MC</div>
<div class=t style="left:1.50px;top:31.84px;font-size:17.9px;line-height:17.9px;color:#000;-webkit-text-stroke:0.3px #000;">Component1-MC</div>
</div>
<div class=a style="left:1012px;top:561px;width:26px;height:43px;background:#8080ff;border:1px solid #5a5ae8;box-sizing:border-box;"></div>
<div class=a style="left:1012px;top:555px;width:57px;height:56px;overflow:hidden">
<div class=t style="left:1.50px;top:10.84px;font-size:17.9px;line-height:17.9px;color:#000;-webkit-text-stroke:0.3px #000;">07-MC-Die Casting</div>
<div class=t style="left:1.50px;top:31.84px;font-size:17.9px;line-height:17.9px;color:#000;-webkit-text-stroke:0.3px #000;">MC-Die Casting</div>
</div>
<div class=a style="left:1069px;top:561px;width:26px;height:43px;background:#26d3c7;border:1px solid #17a99f;box-sizing:border-box;"></div>
<div class=a style="left:1069px;top:555px;width:42px;height:56px;overflow:hidden">
<div class=t style="left:1.50px;top:10.84px;font-size:17.9px;line-height:17.9px;color:#000;-webkit-text-stroke:0.3px #000;">01-Component2-MC</div>
<div class=t style="left:1.50px;top:31.84px;font-size:17.9px;line-height:17.9px;color:#000;-webkit-text-stroke:0.3px #000;">Component2-MC</div>
</div>
<div class=a style="left:1111px;top:561px;width:26px;height:43px;background:#f7587b;border:1px solid #d8365c;box-sizing:border-box;"></div>
<div class=a style="left:1111px;top:555px;width:67px;height:56px;overflow:hidden">
<div class=t style="left:1.50px;top:10.84px;font-size:17.9px;line-height:17.9px;color:#000;-webkit-text-stroke:0.3px #000;">02-Component1-MC</div>
<div class=t style="left:1.50px;top:31.84px;font-size:17.9px;line-height:17.9px;color:#000;-webkit-text-stroke:0.3px #000;">Component1-MC</div>
</div>
<div class=a style="left:1178px;top:561px;width:26px;height:43px;background:#8080ff;border:1px solid #5a5ae8;box-sizing:border-box;"></div>
<div class=a style="left:1178px;top:555px;width:58px;height:56px;overflow:hidden">
<div class=t style="left:1.50px;top:10.84px;font-size:17.9px;line-height:17.9px;color:#000;-webkit-text-stroke:0.3px #000;">02-MC-Die Casting</div>
<div class=t style="left:1.50px;top:31.84px;font-size:17.9px;line-height:17.9px;color:#000;-webkit-text-stroke:0.3px #000;">MC-Die Casting</div>
</div>
<div class=a style="left:1236px;top:561px;width:26px;height:43px;background:#26d3c7;border:1px solid #17a99f;box-sizing:border-box;"></div>
<div class=t style="left:1238.30px;top:565.84px;font-size:17.9px;line-height:17.9px;color:#e0282c;font-weight:700;text-shadow:1px 0 #fff,-1px 0 #fff,0 1px #fff,0 -1px #fff,1px 1px #fff,-1px -1px #fff,1px -1px #fff,-1px 1px #fff;">03-Component2-MC</div>
<div class=t style="left:1238.30px;top:586.84px;font-size:17.9px;line-height:17.9px;color:#e0282c;font-weight:700;text-shadow:1px 0 #fff,-1px 0 #fff,0 1px #fff,0 -1px #fff,1px 1px #fff,-1px -1px #fff,1px -1px #fff,-1px 1px #fff;">Component2-MC</div>
<div class=a style="left:1258px;top:600px;width:6px;height:6px;background:#e0282c;border-radius:50%;"></div>
<div class=a style="left:638px;top:617px;width:26px;height:43px;background:#8080ff;border:1px solid #5a5ae8;box-sizing:border-box;"></div>
<div class=a style="left:638px;top:611px;width:166px;height:56px;overflow:hidden">
<div class=t style="left:1.50px;top:10.84px;font-size:17.9px;line-height:17.9px;color:#000;-webkit-text-stroke:0.3px #000;">04-MC-Die Casting</div>
<div class=t style="left:1.50px;top:31.84px;font-size:17.9px;line-height:17.9px;color:#000;-webkit-text-stroke:0.3px #000;">MC-Die Casting</div>
</div>
<div class=a style="left:804px;top:617px;width:26px;height:43px;background:#8080ff;border:1px solid #5a5ae8;box-sizing:border-box;"></div>
<div class=a style="left:804px;top:611px;width:317px;height:56px;overflow:hidden">
<div class=t style="left:1.50px;top:10.84px;font-size:17.9px;line-height:17.9px;color:#000;-webkit-text-stroke:0.3px #000;">06-MC-Die Casting</div>
<div class=t style="left:1.50px;top:31.84px;font-size:17.9px;line-height:17.9px;color:#000;-webkit-text-stroke:0.3px #000;">MC-Die Casting</div>
</div>
<div class=a style="left:1121px;top:617px;width:26px;height:43px;background:#8080ff;border:1px solid #5a5ae8;box-sizing:border-box;"></div>
<div class=a style="left:1121px;top:611px;width:168px;height:56px;overflow:hidden">
<div class=t style="left:1.50px;top:10.84px;font-size:17.9px;line-height:17.9px;color:#000;-webkit-text-stroke:0.3px #000;">01-MC-Die Casting</div>
<div class=t style="left:1.50px;top:31.84px;font-size:17.9px;line-height:17.9px;color:#000;-webkit-text-stroke:0.3px #000;">MC-Die Casting</div>
</div>
<div class=a style="left:1289px;top:617px;width:25px;height:43px;background:#8080ff;border:1px solid #5a5ae8;box-sizing:border-box;"></div>
<div class=t style="left:1291.30px;top:621.84px;font-size:17.9px;line-height:17.9px;color:#e0282c;font-weight:700;text-shadow:1px 0 #fff,-1px 0 #fff,0 1px #fff,0 -1px #fff,1px 1px #fff,-1px -1px #fff,1px -1px #fff,-1px 1px #fff;">03-MC-Die Casting</div>
<div class=t style="left:1291.30px;top:642.84px;font-size:17.9px;line-height:17.9px;color:#e0282c;font-weight:700;text-shadow:1px 0 #fff,-1px 0 #fff,0 1px #fff,0 -1px #fff,1px 1px #fff,-1px -1px #fff,1px -1px #fff,-1px 1px #fff;">MC-Die Casting</div>
<div class=a style="left:1310px;top:656px;width:6px;height:6px;background:#e0282c;border-radius:50%;"></div>
<div class=a style="left:721px;top:673px;width:26px;height:43px;background:#8080ff;border:1px solid #5a5ae8;box-sizing:border-box;"></div>
<div class=a style="left:721px;top:667px;width:317px;height:56px;overflow:hidden">
<div class=t style="left:1.50px;top:10.84px;font-size:17.9px;line-height:17.9px;color:#000;-webkit-text-stroke:0.3px #000;">05-MC-Die Casting</div>
<div class=t style="left:1.50px;top:31.84px;font-size:17.9px;line-height:17.9px;color:#000;-webkit-text-stroke:0.3px #000;">MC-Die Casting</div>
</div>
<div class=a style="left:1038px;top:673px;width:26px;height:43px;background:#8080ff;border:1px solid #5a5ae8;box-sizing:border-box;"></div>
<div class=a style="left:1038px;top:667px;width:166px;height:56px;overflow:hidden">
<div class=t style="left:1.50px;top:10.84px;font-size:17.9px;line-height:17.9px;color:#000;-webkit-text-stroke:0.3px #000;">07-MC-Die Casting</div>
<div class=t style="left:1.50px;top:31.84px;font-size:17.9px;line-height:17.9px;color:#000;-webkit-text-stroke:0.3px #000;">MC-Die Casting</div>
</div>
<div class=a style="left:1204px;top:673px;width:26px;height:43px;background:#8080ff;border:1px solid #5a5ae8;box-sizing:border-box;"></div>
<div class=t style="left:1206.30px;top:677.84px;font-size:17.9px;line-height:17.9px;color:#e0282c;font-weight:700;text-shadow:1px 0 #fff,-1px 0 #fff,0 1px #fff,0 -1px #fff,1px 1px #fff,-1px -1px #fff,1px -1px #fff,-1px 1px #fff;">02-MC-Die Casting</div>
<div class=t style="left:1206.30px;top:698.84px;font-size:17.9px;line-height:17.9px;color:#e0282c;font-weight:700;text-shadow:1px 0 #fff,-1px 0 #fff,0 1px #fff,0 -1px #fff,1px 1px #fff,-1px -1px #fff,1px -1px #fff,-1px 1px #fff;">MC-Die Casting</div>
<div class=a style="left:1226px;top:712px;width:6px;height:6px;background:#e0282c;border-radius:50%;"></div>
<div class=a style="left:664px;top:729px;width:18px;height:43px;background:#f8d2d2;border:1px solid #e2a9a9;box-sizing:border-box;"></div>
<div class=a style="left:664px;top:723px;width:83px;height:56px;overflow:hidden">
<div class=t style="left:1.50px;top:10.84px;font-size:17.9px;line-height:17.9px;color:#000;-webkit-text-stroke:0.3px #000;">04</div>
</div>
<div class=a style="left:747px;top:729px;width:19px;height:43px;background:#f8d2d2;border:1px solid #e2a9a9;box-sizing:border-box;"></div>
<div class=a style="left:747px;top:723px;width:83px;height:56px;overflow:hidden">
<div class=t style="left:1.50px;top:10.84px;font-size:17.9px;line-height:17.9px;color:#000;-webkit-text-stroke:0.3px #000;">05</div>
</div>
<div class=a style="left:830px;top:729px;width:169px;height:43px;background:#f8d2d2;border:1px solid #e2a9a9;box-sizing:border-box;"></div>
<div class=a style="left:848px;top:729px;width:150px;height:38px;background:#ffffff;border-right:1px solid #e2a9a9;border-bottom:1px solid #e2a9a9;box-sizing:border-box;"></div>
<div class=a style="left:923px;top:729px;width:1px;height:37px;background:#c8c8c8;"></div>
<div class=a style="left:830px;top:723px;width:234px;height:56px;overflow:hidden">
<div class=t style="left:1.50px;top:10.84px;font-size:17.9px;line-height:17.9px;color:#000;-webkit-text-stroke:0.3px #000;">06</div>
</div>
<div class=a style="left:1064px;top:729px;width:18px;height:43px;background:#f8d2d2;border:1px solid #e2a9a9;box-sizing:border-box;"></div>
<div class=a style="left:1064px;top:723px;width:83px;height:56px;overflow:hidden">
<div class=t style="left:2.30px;top:10.84px;font-size:17.9px;line-height:17.9px;color:#e0282c;font-weight:700;text-shadow:1px 0 #fff,-1px 0 #fff,0 1px #fff,0 -1px #fff,1px 1px #fff,-1px -1px #fff,1px -1px #fff,-1px 1px #fff;">07</div>
</div>
<div class=a style="left:1078px;top:768px;width:6px;height:6px;background:#e0282c;border-radius:50%;"></div>
<div class=a style="left:1147px;top:729px;width:19px;height:43px;background:#f8d2d2;border:1px solid #e2a9a9;box-sizing:border-box;"></div>
<div class=a style="left:1147px;top:723px;width:83px;height:56px;overflow:hidden">
<div class=t style="left:1.50px;top:10.84px;font-size:17.9px;line-height:17.9px;color:#000;-webkit-text-stroke:0.3px #000;">01</div>
</div>
<div class=a style="left:1230px;top:729px;width:19px;height:43px;background:#f8d2d2;border:1px solid #e2a9a9;box-sizing:border-box;"></div>
<div class=a style="left:1230px;top:723px;width:84px;height:56px;overflow:hidden">
<div class=t style="left:2.30px;top:10.84px;font-size:17.9px;line-height:17.9px;color:#e0282c;font-weight:700;text-shadow:1px 0 #fff,-1px 0 #fff,0 1px #fff,0 -1px #fff,1px 1px #fff,-1px -1px #fff,1px -1px #fff,-1px 1px #fff;">02</div>
</div>
<div class=a style="left:1245px;top:768px;width:6px;height:6px;background:#e0282c;border-radius:50%;"></div>
<div class=a style="left:1314px;top:729px;width:18px;height:43px;background:#f8d2d2;border:1px solid #e2a9a9;box-sizing:border-box;"></div>
<div class=t style="left:1316.30px;top:733.84px;font-size:17.9px;line-height:17.9px;color:#e0282c;font-weight:700;text-shadow:1px 0 #fff,-1px 0 #fff,0 1px #fff,0 -1px #fff,1px 1px #fff,-1px -1px #fff,1px -1px #fff,-1px 1px #fff;">03</div>
<div class=a style="left:1328px;top:768px;width:6px;height:6px;background:#e0282c;border-radius:50%;"></div>
<div class=a style="left:491px;top:381px;width:2px;height:4px;background:#ff00ff;"></div>
<div class=a style="left:491px;top:384px;width:128px;height:2px;background:#ff00ff;"></div>
<div class=a style="left:617px;top:384px;width:2px;height:9px;background:#ff00ff;"></div>
<div class=a style="left:489.5px;top:375.5px;width:6px;height:6px;background:#00ee00;border:1px solid #3c9c3c;box-sizing:border-box;"></div>
<div class=a style="left:614.5px;top:390.5px;width:6px;height:6px;background:#00ee00;border:1px solid #3c9c3c;box-sizing:border-box;"></div>
<div class=a style="left:642px;top:437px;width:2px;height:10px;background:#0000ff;"></div>
<div class=a style="left:640.5px;top:431.5px;width:6px;height:6px;background:#00ee00;border:1px solid #3c9c3c;box-sizing:border-box;"></div>
<div class=a style="left:640.5px;top:446.5px;width:6px;height:6px;background:#00ee00;border:1px solid #3c9c3c;box-sizing:border-box;"></div>
<div class=a style="left:668px;top:493px;width:2px;height:10px;background:#0000ff;"></div>
<div class=a style="left:666.5px;top:488px;width:6px;height:6px;background:#00ee00;border:1px solid #3c9c3c;box-sizing:border-box;"></div>
<div class=a style="left:666.5px;top:503px;width:6px;height:6px;background:#00ee00;border:1px solid #3c9c3c;box-sizing:border-box;"></div>
<div class=a style="left:694px;top:549px;width:2px;height:10px;background:#ff00ff;"></div>
<div class=a style="left:692.5px;top:544px;width:6px;height:6px;background:#00ee00;border:1px solid #3c9c3c;box-sizing:border-box;"></div>
<div class=a style="left:692.5px;top:558.5px;width:6px;height:6px;background:#00ee00;border:1px solid #3c9c3c;box-sizing:border-box;"></div>
<div class=a style="left:720px;top:605px;width:2px;height:66px;background:#0000ff;"></div>
<div class=a style="left:718.5px;top:600px;width:6px;height:6px;background:#00ee00;border:1px solid #3c9c3c;box-sizing:border-box;"></div>
<div class=a style="left:718.5px;top:670.5px;width:6px;height:6px;background:#00ee00;border:1px solid #3c9c3c;box-sizing:border-box;"></div>
<div class=a style="left:746px;top:717px;width:2px;height:10px;background:#ff00ff;"></div>
<div class=a style="left:744.5px;top:711.5px;width:6px;height:6px;background:#00ee00;border:1px solid #3c9c3c;box-sizing:border-box;"></div>
<div class=a style="left:744.5px;top:726.5px;width:6px;height:6px;background:#00ee00;border:1px solid #3c9c3c;box-sizing:border-box;"></div>
<div class=a style="left:5px;top:812px;width:113px;height:42px;background:#f5f5f8;"></div>
<div class=a style="left:118px;top:812px;width:1px;height:43px;background:#cdd0dc;"></div>
<div class=t style="left:12.50px;top:826.30px;font-size:15px;line-height:15px;color:#1f5fa8;font-weight:700;transform:scaleX(0.9359);transform-origin:0 0;">Standard Style</div>
<svg style="left:1426px;top:828px" width="8" height="11" viewBox="0 0 8 11"><path d="M6.5 1 L1 5.5 L6.5 10 Z" fill="none" stroke="#777" stroke-width="1.3"/></svg>
<svg style="left:1446px;top:828px" width="8" height="11" viewBox="0 0 8 11"><path d="M1.5 1 L7 5.5 L1.5 10 Z" fill="none" stroke="#777" stroke-width="1.3"/></svg>
<div class=a style="left:4px;top:855px;width:1457px;height:6px;background:#cbcdda;"></div>
<div class=t style="left:8.50px;top:868.14px;font-size:14px;line-height:14px;color:#1e1e1e;transform:scaleX(0.7643);transform-origin:0 0;">メッセージウィンドウ</div>
<svg style="left:126px;top:873px" width="1261" height="5" shape-rendering="crispEdges"><rect width="1261" height="5" fill="url(#gripp)"/></svg>
<svg style="left:1397px;top:874px" width="11" height="7" viewBox="0 0 11 7"><path d="M0 0 H11 L5.5 6.5 Z" fill="#555"/></svg>
<svg style="left:1420px;top:869px" width="11" height="13" viewBox="0 0 11 13"><path d="M2.5 0.8 H8.5 M3.5 0.8 V7 M7.5 0.8 V7 M1 7.2 H10 M5.5 7.2 V12.5" fill="none" stroke="#555" stroke-width="1.6"/><rect x="3.5" y="1" width="2" height="6" fill="#555"/></svg>
<svg style="left:1443px;top:869px" width="11" height="11" viewBox="0 0 11 11"><path d="M1 1 L10 10 M10 1 L1 10" stroke="#555" stroke-width="1.6"/></svg>
<div class=a style="left:4px;top:891px;width:1437px;height:22px;background:#e0e0e0;border-top:1px solid #c4c4c4;border-bottom:1px solid #c4c4c4;box-sizing:border-box;"></div>
<div class=t style="left:8.33px;top:894.84px;font-size:14px;line-height:14px;color:#000;">S</div>
<div class=t style="left:570.50px;top:895.14px;font-size:14px;line-height:14px;color:#000;transform:scaleX(1.0482);transform-origin:0 0;">Message - &lt;All messages&gt;</div>
<div class=t style="left:1353.00px;top:894.74px;font-size:14px;line-height:14px;color:#000;transform:scaleX(1.0460);transform-origin:0 0;">Time</div>
<div class=a style="left:5px;top:913px;width:1435px;height:22px;background:#eeeeee;"></div>
<div class=a style="left:1298px;top:913px;width:142px;height:22px;background:#eeeeee;"></div>
<div class=a style="left:22px;top:891px;width:1px;height:44px;background:#c4c4c4;"></div>
<div class=a style="left:1297px;top:891px;width:1px;height:44px;background:#c4c4c4;"></div>
<div class=a style="left:1440px;top:891px;width:1px;height:44px;background:#c4c4c4;"></div>
<div class=a style="left:4px;top:891px;width:1px;height:44px;background:#c4c4c4;"></div>
<div class=a style="left:4px;top:913px;width:20px;height:22px;border:2px solid #222;box-sizing:border-box;"></div>
<svg style="left:6px;top:917px" width="14" height="14" viewBox="0 0 14 14"><circle cx="6.5" cy="6.5" r="6.3" fill="#0f9d8e"/><rect x="5.5" y="5.5" width="2.4" height="5" fill="#fff"/><circle cx="6.7" cy="3.4" r="1.3" fill="#fff"/></svg>
<div class=t style="left:42.70px;top:917.02px;font-size:14.5px;line-height:14.5px;color:#000;transform:scaleX(0.6933);transform-origin:0 0;">バイナリファイルをセーブしました。</div>
<div class=t style="left:225.60px;top:917.02px;font-size:14.5px;line-height:14.5px;color:#000;transform:scaleX(0.9900);transform-origin:0 0;">: 0.202</div>
<div class=t style="left:274.40px;top:917.02px;font-size:14.5px;line-height:14.5px;color:#000;transform:scaleX(0.8133);transform-origin:0 0;">秒</div>
<div class=t style="left:291.90px;top:917.02px;font-size:14.5px;line-height:14.5px;color:#000;transform:scaleX(1.0126);transform-origin:0 0;">&lt;C:\Users\dlab9\OneDrive\Desktop\demo.aru&gt;</div>
<div class=t style="left:1307.50px;top:916.82px;font-size:14.5px;line-height:14.5px;color:#000;transform:scaleX(0.9846);transform-origin:0 0;">05/03/2026 17:28:02</div>
<div class=a style="left:1441px;top:934px;width:82px;height:1px;background:#ffffff;"></div>
<div class=a style="left:1px;top:935px;width:1523px;height:29px;background:#007acc;"></div>
<div class=t style="left:10.00px;top:942.70px;font-size:15px;line-height:15px;color:#ffffff;transform:scaleX(0.9525);transform-origin:0 0;">Ready</div>
<div class=t style="left:602.00px;top:942.70px;font-size:15px;line-height:15px;color:#ffffff;transform:scaleX(0.9918);transform-origin:0 0;">Operations:  1 Total qty: 100 Total prod time: 8h20m</div>
<div class=t style="left:1408.60px;top:942.20px;font-size:15px;line-height:15px;color:#8cc8f2;transform:scaleX(0.8675);transform-origin:0 0;">CAI</div>
<div class=t style="left:1436.80px;top:942.20px;font-size:15px;line-height:15px;color:#ffffff;transform:scaleX(0.8779);transform-origin:0 0;">NUM</div>
<div class=a style="left:1463px;top:940px;width:5px;height:20px;background:#007acc;"></div>
<div class=t style="left:1469.70px;top:942.20px;font-size:15px;line-height:15px;color:#8cc8f2;transform:scaleX(0.7893);transform-origin:0 0;">SCR</div>
<svg style="left:1509px;top:951px" width="10" height="9" viewBox="0 0 10 9"><g fill="#d8c8b0"><rect x="6.5" y="0" width="2" height="2"/><rect x="3.5" y="3" width="2" height="2"/><rect x="6.5" y="3" width="2" height="2"/><rect x="0.5" y="6" width="2" height="2"/><rect x="3.5" y="6" width="2" height="2"/><rect x="6.5" y="6" width="2" height="2"/></g></svg>
<svg style="left:1473px;top:216px" width="37" height="35" viewBox="0 0 37 35"><g fill="#f5820f"><rect x="0" y="0" width="18" height="7.5" rx="3.5"/><rect x="23" y="0" width="13" height="7.5" rx="3.5"/><rect x="0" y="13" width="10" height="7.5" rx="3.5"/><rect x="16" y="13" width="13" height="7.5" rx="3"/><rect x="16" y="6" width="5" height="10"/><rect x="25" y="14" width="5" height="14"/><rect x="0" y="26" width="20" height="7.5" rx="3.5"/><rect x="26" y="26" width="10" height="7.5" rx="3.5"/></g></svg>
<svg style="left:1473px;top:273px" width="37" height="34" viewBox="0 0 37 34"><g fill="#f0449a"><rect x="0" y="0" width="17" height="7" rx="3.5"/><rect x="0" y="13" width="10" height="7" rx="3.5"/><rect x="20" y="25" width="16" height="7.5" rx="3.5"/></g><path d="M15 5 V10 H21.5 V25 M8 17 V25.5 H21" fill="none" stroke="#d83a8a" stroke-width="2"/></svg>
<svg style="left:1473px;top:329px" width="37" height="36" viewBox="0 0 37 36"><g fill="#f0449a"><path d="M2 0 H34 Q36 0 36 2 V13 L31 8 H6 L2 12 Q0 12 0 10 V2 Q0 0 2 0 Z"/><rect x="0" y="13" width="13" height="7" rx="3.5"/><rect x="13" y="20.5" width="9.5" height="7" rx="3.5"/><rect x="23" y="28" width="13" height="7.5" rx="3.5"/></g></svg>
<svg style="left:1473px;top:389px" width="37" height="21" viewBox="0 0 37 21"><g fill="#f0449a"><rect x="0" y="5" width="19" height="10"/><rect x="15" y="0" width="21" height="20.5" rx="3"/></g></svg>
<svg style="left:1473px;top:440px" width="37" height="34" viewBox="0 0 37 34"><rect x="0" y="8" width="36" height="2.6" fill="#1a86d8"/><path d="M12.3 0 H18.8 Q21.8 0 21.8 3 V15.6 H29.7 Q32.7 15.6 32.7 18.6 V29.5 Q32.7 32.5 29.7 32.5 H3 Q0 32.5 0 29.5 V26.2 Q0 23.2 3 23.2 H9.3 V3 Q9.3 0 12.3 0 Z" fill="#1896ee"/></svg>
<svg style="left:1473px;top:500px" width="37" height="28" viewBox="0 0 37 28"><path d="M0 1.3 H6.6 L12.5 11.2 H16.5 L23 19.3 H25.6 L31 14.3 H36 V23.3 Q36 26.3 33 26.3 H3 Q0 26.3 0 23.3 Z" fill="#55cc33"/></svg>
<svg style="left:1473px;top:552px" width="37" height="34" viewBox="0 0 37 34"><g fill="#9b3fe0"><rect x="0" y="0" width="36" height="2.6" rx="1"/><rect x="0" y="5.5" width="10" height="4.5" rx="2.2"/><rect x="13" y="5.5" width="10" height="4.5" rx="2.2"/><rect x="26" y="5.5" width="10" height="4.5" rx="2.2"/><rect x="0" y="13" width="10" height="4.5" rx="2.2"/><rect x="13" y="13" width="10" height="4.5" rx="2.2"/><rect x="26" y="13" width="10" height="4.5" rx="2.2"/><rect x="13" y="20.5" width="10" height="4.5" rx="2.2"/><rect x="26" y="20.5" width="10" height="4.5" rx="2.2"/><rect x="26" y="28" width="10" height="4.5" rx="2.2"/></g></svg>
<div class=a style="left:1463px;top:603px;width:56px;height:1px;background:#c8cde0;"></div>
<svg style="left:1474px;top:619px" width="34" height="34" viewBox="0 0 34 34"><circle cx="13" cy="13" r="10.5" fill="none" stroke="#505050" stroke-width="2.6"/><path d="M7.5 12 H18" stroke="#505050" stroke-width="2.6"/><path d="M21 21 L30 30" stroke="#505050" stroke-width="4" stroke-linecap="round"/></svg>
</body></html>
